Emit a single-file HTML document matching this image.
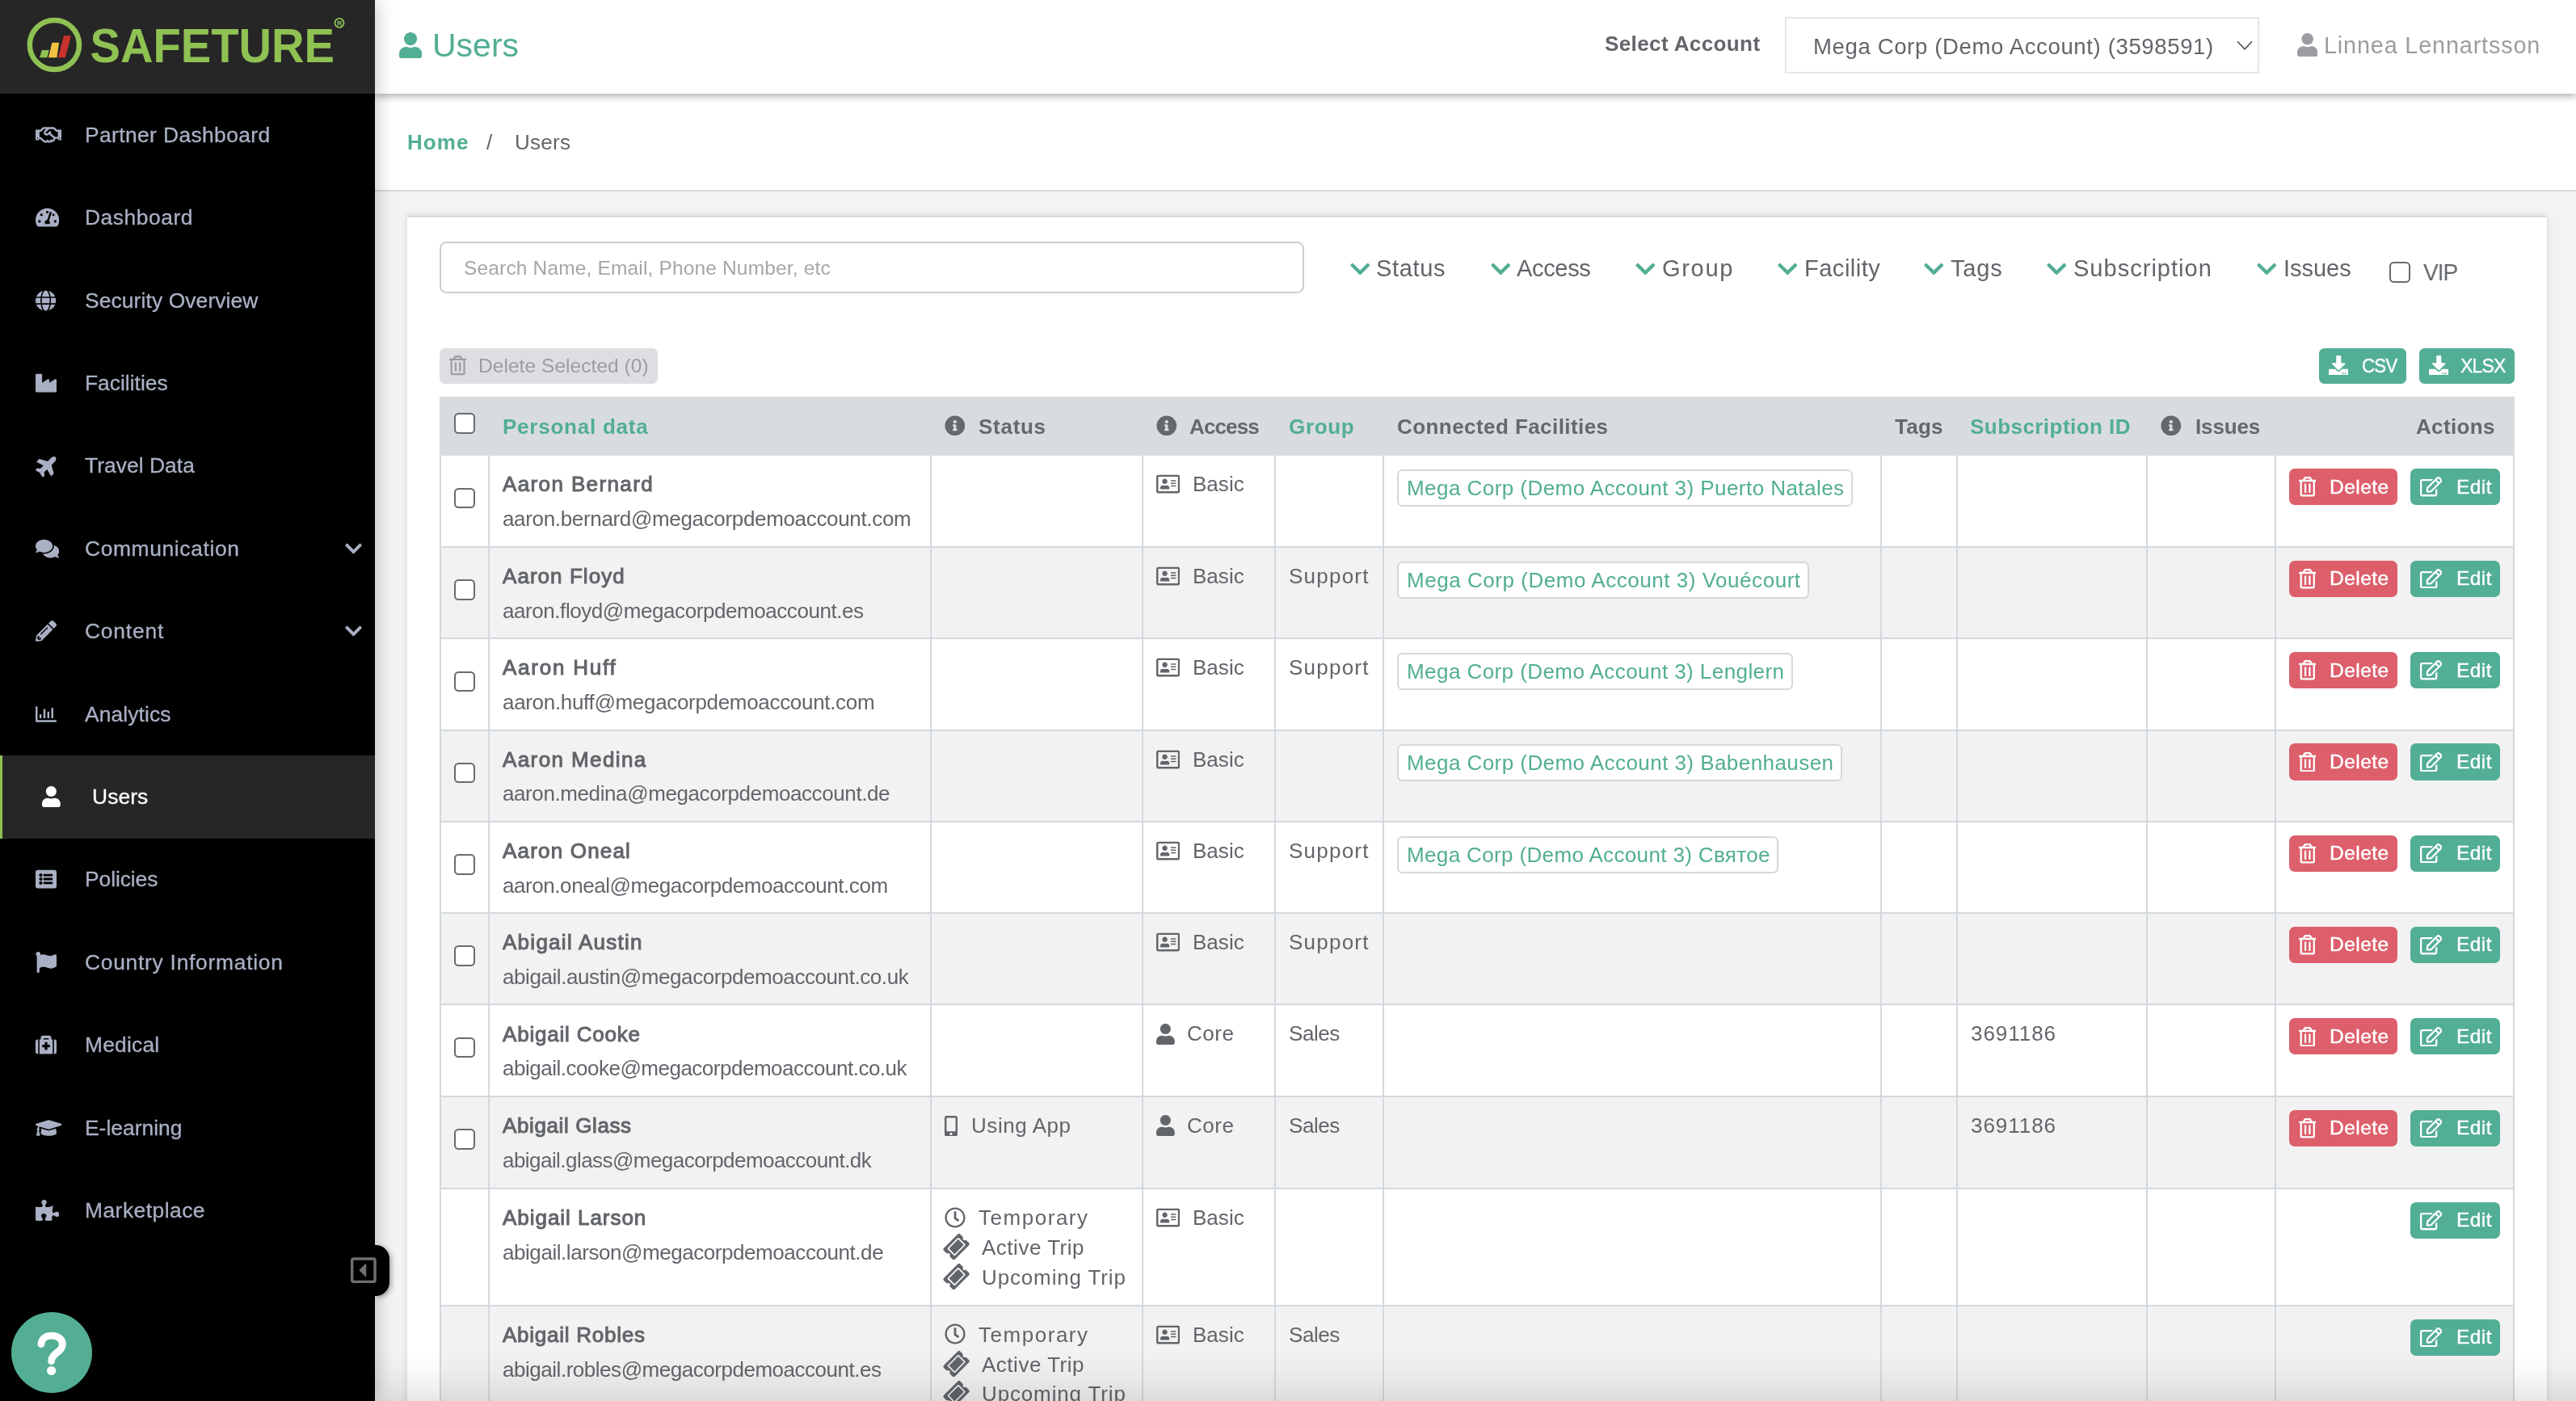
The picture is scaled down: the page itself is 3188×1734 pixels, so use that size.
<!DOCTYPE html>
<html><head><meta charset="utf-8"><title>Users</title><style>
html,body{margin:0;padding:0;overflow:hidden}
body{width:3188px;height:1734px;overflow:hidden;position:relative;background:#fff;font-family:"Liberation Sans",sans-serif}
.t{position:absolute;white-space:pre;line-height:1;transform-origin:0 50%;will-change:transform}
#contentbg{position:absolute;left:464px;top:236px;width:2724px;height:1498px;background:#f3f3f3}
#card{position:absolute;left:504px;top:267.2px;width:2648px;height:1600px;background:#fff;box-sizing:border-box;border-top:2px solid #d4d9dd;box-shadow:0 0 9px rgba(0,0,0,.12)}
#crumb{position:absolute;left:464px;top:116px;width:2724px;height:118.8px;background:#fff;border-bottom:2.2px solid #d3d8dc}
#header{position:absolute;left:464px;top:0;width:2724px;height:116px;background:#fff;box-shadow:0 3px 9px rgba(0,0,0,.33)}
#sidebar{position:absolute;left:0;top:0;width:464px;height:1734px;background:#000;box-shadow:0 0 23px rgba(0,0,0,.27)}
#logobar{position:absolute;left:0;top:0;width:464px;height:116px;background:#262626}
#botshadow{position:absolute;left:464px;top:1672px;width:2724px;height:62px;background:linear-gradient(to bottom,rgba(0,0,0,0) 0%,rgba(0,0,0,.022) 40%,rgba(0,0,0,.055) 72%,rgba(0,0,0,.095) 100%)}
</style></head><body>
<div id="contentbg"></div>
<div id="card"></div>
<div id="crumb"></div>
<span class="t" style="left: 504.27px; top: 162.99px; font-size: 26px; color: rgb(82, 174, 148); font-weight: 700; letter-spacing: 1.043px;">Home</span>
<span class="t" style="left:602.27px;top:162.99px;font-size:26px;color:#62656a;font-weight:400;">/</span>
<span class="t" style="left: 637.27px; top: 162.99px; font-size: 26px; color: rgb(98, 101, 106); font-weight: 400; letter-spacing: 0.293px;">Users</span>
<div id="header"></div>
<svg style="position:absolute;left:493.80px;top:39.80px;width:28.18px;height:32.20px;" viewBox="0 0 448 512" preserveAspectRatio="none"><path fill="#52ae94" d="M224 256c70.7 0 128-57.3 128-128S294.7 0 224 0 96 57.3 96 128s57.3 128 128 128zm89.6 32h-16.700c-22.200 10.200-46.900 16-72.900 16s-50.600-5.800-72.900-16h-16.700C60.200 288 0 348.200 0 422.400V464c0 26.500 21.500 48 48 48h352c26.500 0 48-21.500 48-48v-41.600c0-74.200-60.200-134.400-134.400-134.400z"></path></svg>
<span class="t" style="left: 535.05px; top: 36.29px; font-size: 41px; color: rgb(82, 174, 148); font-weight: 400; letter-spacing: 0px;">Users</span>
<span class="t" style="left: 1986.47px; top: 41.39px; font-size: 26px; color: rgb(98, 101, 106); font-weight: 700; letter-spacing: 0.4px;">Select Account</span>
<div style="position:absolute;left:2208.60px;top:21.00px;width:587.00px;height:70.00px;box-sizing:border-box;border:2px solid #e4e7ea;background:#fff"></div>
<span class="t" style="left: 2243.53px; top: 43.72px; font-size: 27.5px; color: rgb(98, 101, 106); font-weight: 400; letter-spacing: 0.647px;">Mega Corp (Demo Account) (3598591)</span>
<svg style="position:absolute;left:2767px;top:49px;width:22px;height:15px" viewBox="0 0 22 15"><path d="M2.6 2.8 L11 11.8 L19.4 2.8" fill="none" stroke="#5e6267" stroke-width="1.8" stroke-linecap="round" stroke-linejoin="round"></path></svg>
<svg style="position:absolute;left:2843.00px;top:41.00px;width:25.38px;height:29.00px;" viewBox="0 0 448 512" preserveAspectRatio="none"><path fill="#9b9da0" d="M224 256c70.7 0 128-57.3 128-128S294.7 0 224 0 96 57.3 96 128s57.3 128 128 128zm89.6 32h-16.700c-22.200 10.200-46.900 16-72.900 16s-50.600-5.800-72.900-16h-16.700C60.200 288 0 348.200 0 422.400V464c0 26.500 21.500 48 48 48h352c26.500 0 48-21.500 48-48v-41.600c0-74.200-60.200-134.400-134.400-134.400z"></path></svg>
<span class="t" style="left: 2875.59px; top: 42.22px; font-size: 28.8px; color: rgb(155, 157, 160); font-weight: 400; letter-spacing: 0.842px;">Linnea Lennartsson</span>
<div style="position:absolute;left:544.10px;top:299.00px;width:1069.90px;height:63.90px;box-sizing:border-box;border:2px solid #c9ced5;border-radius:8.5px;background:#fff"></div>
<span class="t" style="left: 573.61px; top: 319.96px; font-size: 24.5px; color: rgb(164, 166, 169); font-weight: 400; letter-spacing: 0.157px;">Search Name, Email, Phone Number, etc</span>
<svg style="position:absolute;left:1670.50px;top:318.50px;width:24.50px;height:28.00px;" viewBox="0 0 448 512" preserveAspectRatio="none"><path fill="#52ae94" d="M207.029 381.476L12.686 187.132c-9.373-9.373-9.373-24.569 0-33.941l22.667-22.667c9.357-9.357 24.522-9.375 33.901-.04L224 284.505l154.745-154.021c9.379-9.335 24.544-9.317 33.901.04l22.667 22.667c9.373 9.373 9.373 24.569 0 33.941L240.971 381.476c-9.373 9.372-24.569 9.372-33.942 0z"></path></svg>
<span class="t" style="left: 1703.19px; top: 318.45px; font-size: 29px; color: rgb(98, 101, 106); font-weight: 400; letter-spacing: 0.68px;">Status</span>
<svg style="position:absolute;left:1844.50px;top:318.50px;width:24.50px;height:28.00px;" viewBox="0 0 448 512" preserveAspectRatio="none"><path fill="#52ae94" d="M207.029 381.476L12.686 187.132c-9.373-9.373-9.373-24.569 0-33.941l22.667-22.667c9.357-9.357 24.522-9.375 33.901-.04L224 284.505l154.745-154.021c9.379-9.335 24.544-9.317 33.901.04l22.667 22.667c9.373 9.373 9.373 24.569 0 33.941L240.971 381.476c-9.373 9.372-24.569 9.372-33.942 0z"></path></svg>
<span class="t" style="left: 1877.19px; top: 318.45px; font-size: 29px; color: rgb(98, 101, 106); font-weight: 400; letter-spacing: -0.333px;">Access</span>
<svg style="position:absolute;left:2024.00px;top:318.50px;width:24.50px;height:28.00px;" viewBox="0 0 448 512" preserveAspectRatio="none"><path fill="#52ae94" d="M207.029 381.476L12.686 187.132c-9.373-9.373-9.373-24.569 0-33.941l22.667-22.667c9.357-9.357 24.522-9.375 33.901-.04L224 284.505l154.745-154.021c9.379-9.335 24.544-9.317 33.901.04l22.667 22.667c9.373 9.373 9.373 24.569 0 33.941L240.971 381.476c-9.373 9.372-24.569 9.372-33.942 0z"></path></svg>
<span class="t" style="left: 2057.19px; top: 318.45px; font-size: 29px; color: rgb(98, 101, 106); font-weight: 400; letter-spacing: 1.678px;">Group</span>
<svg style="position:absolute;left:2200.00px;top:318.50px;width:24.50px;height:28.00px;" viewBox="0 0 448 512" preserveAspectRatio="none"><path fill="#52ae94" d="M207.029 381.476L12.686 187.132c-9.373-9.373-9.373-24.569 0-33.941l22.667-22.667c9.357-9.357 24.522-9.375 33.901-.04L224 284.505l154.745-154.021c9.379-9.335 24.544-9.317 33.901.04l22.667 22.667c9.373 9.373 9.373 24.569 0 33.941L240.971 381.476c-9.373 9.372-24.569 9.372-33.942 0z"></path></svg>
<span class="t" style="left: 2233.19px; top: 318.45px; font-size: 29px; color: rgb(98, 101, 106); font-weight: 400; letter-spacing: 0.512px;">Facility</span>
<svg style="position:absolute;left:2381.00px;top:318.50px;width:24.50px;height:28.00px;" viewBox="0 0 448 512" preserveAspectRatio="none"><path fill="#52ae94" d="M207.029 381.476L12.686 187.132c-9.373-9.373-9.373-24.569 0-33.941l22.667-22.667c9.357-9.357 24.522-9.375 33.901-.04L224 284.505l154.745-154.021c9.379-9.335 24.544-9.317 33.901.04l22.667 22.667c9.373 9.373 9.373 24.569 0 33.941L240.971 381.476c-9.373 9.372-24.569 9.372-33.942 0z"></path></svg>
<span class="t" style="left: 2414.19px; top: 318.45px; font-size: 29px; color: rgb(98, 101, 106); font-weight: 400; letter-spacing: 0.851px;">Tags</span>
<svg style="position:absolute;left:2533.00px;top:318.50px;width:24.50px;height:28.00px;" viewBox="0 0 448 512" preserveAspectRatio="none"><path fill="#52ae94" d="M207.029 381.476L12.686 187.132c-9.373-9.373-9.373-24.569 0-33.941l22.667-22.667c9.357-9.357 24.522-9.375 33.901-.04L224 284.505l154.745-154.021c9.379-9.335 24.544-9.317 33.901.04l22.667 22.667c9.373 9.373 9.373 24.569 0 33.941L240.971 381.476c-9.373 9.372-24.569 9.372-33.942 0z"></path></svg>
<span class="t" style="left: 2565.69px; top: 318.45px; font-size: 29px; color: rgb(98, 101, 106); font-weight: 400; letter-spacing: 1.021px;">Subscription</span>
<svg style="position:absolute;left:2792.50px;top:318.50px;width:24.50px;height:28.00px;" viewBox="0 0 448 512" preserveAspectRatio="none"><path fill="#52ae94" d="M207.029 381.476L12.686 187.132c-9.373-9.373-9.373-24.569 0-33.941l22.667-22.667c9.357-9.357 24.522-9.375 33.901-.04L224 284.505l154.745-154.021c9.379-9.335 24.544-9.317 33.901.04l22.667 22.667c9.373 9.373 9.373 24.569 0 33.941L240.971 381.476c-9.373 9.372-24.569 9.372-33.942 0z"></path></svg>
<span class="t" style="left: 2826.19px; top: 318.45px; font-size: 29px; color: rgb(98, 101, 106); font-weight: 400; letter-spacing: -0.022px;">Issues</span>
<div style="position:absolute;left:2956.90px;top:324.00px;width:26.00px;height:26.00px;box-sizing:border-box;border:2.4px solid #6b6b6b;border-radius:5.5px;background:#fff"></div>
<span class="t" style="left: 2998.89px; top: 322.75px; font-size: 29px; color: rgb(98, 101, 106); font-weight: 400; letter-spacing: -1.015px; transform: scaleX(0.9687);">VIP</span>
<div style="position:absolute;left:544.00px;top:430.90px;width:270.00px;height:43.90px;background:#dcdee2;border-radius:6.5px"></div>
<svg style="position:absolute;left:556.40px;top:440.40px;width:21.18px;height:24.20px;" viewBox="0 0 448 512" preserveAspectRatio="none"><path fill="#9b9da0" d="M268 416h24a12 12 0 0 0 12-12V188a12 12 0 0 0-12-12h-24a12 12 0 0 0-12 12v216a12 12 0 0 0 12 12zM432 80h-82.410l-34-56.700A48 48 0 0 0 274.410 0H173.590a48 48 0 0 0-41.160 23.300L98.410 80H16A16 16 0 0 0 0 96v16a16 16 0 0 0 16 16h16v336a48 48 0 0 0 48 48h288a48 48 0 0 0 48-48V128h16a16 16 0 0 0 16-16V96a16 16 0 0 0-16-16zM171.840 50.910A6 6 0 0 1 177 48h94a6 6 0 0 1 5.150 2.910L293.610 80H154.390zM368 464H80V128h288zm-212-48h24a12 12 0 0 0 12-12V188a12 12 0 0 0-12-12h-24a12 12 0 0 0-12 12v216a12 12 0 0 0 12 12z"></path></svg>
<span class="t" style="left: 591.81px; top: 441.46px; font-size: 24.5px; color: rgb(155, 157, 160); font-weight: 400; letter-spacing: 0.051px;">Delete Selected (0)</span>
<div style="position:absolute;left:2870.00px;top:430.90px;width:108.00px;height:43.90px;background:#52ae94;border-radius:6.5px"></div>
<svg style="position:absolute;left:2881.80px;top:439.80px;width:24.50px;height:24.50px;" viewBox="0 0 512 512" preserveAspectRatio="none"><path fill="#fff" d="M216 0h80c13.300 0 24 10.700 24 24v168h87.700c17.800 0 26.700 21.500 14.100 34.100L269.700 378.300c-7.500 7.500-19.800 7.500-27.300 0L90.100 226.100c-12.600-12.600-3.700-34.100 14.100-34.100H192V24c0-13.300 10.700-24 24-24zm296 376v112c0 13.300-10.700 24-24 24H24c-13.300 0-24-10.700-24-24V376c0-13.300 10.700-24 24-24h146.700l49 49c20.100 20.100 52.500 20.100 72.600 0l49-49H488c13.300 0 24 10.700 24 24zm-124 88c0-11-9-20-20-20s-20 9-20 20 9 20 20 20 20-9 20-20zm64 0c0-11-9-20-20-20s-20 9-20 20 9 20 20 20 20-9 20-20z"></path></svg>
<span class="t" style="left: 2923.01px; top: 441.26px; font-size: 24.5px; color: rgb(255, 255, 255); font-weight: 400; -webkit-text-stroke: 0.4px rgb(255, 255, 255); letter-spacing: -0.858px; transform: scaleX(0.9094);">CSV</span>
<div style="position:absolute;left:2994.00px;top:430.90px;width:118.00px;height:43.90px;background:#52ae94;border-radius:6.5px"></div>
<svg style="position:absolute;left:3005.90px;top:439.80px;width:24.50px;height:24.50px;" viewBox="0 0 512 512" preserveAspectRatio="none"><path fill="#fff" d="M216 0h80c13.300 0 24 10.700 24 24v168h87.700c17.800 0 26.700 21.500 14.100 34.100L269.700 378.300c-7.500 7.500-19.800 7.500-27.300 0L90.100 226.100c-12.600-12.600-3.700-34.100 14.100-34.100H192V24c0-13.300 10.700-24 24-24zm296 376v112c0 13.300-10.700 24-24 24H24c-13.300 0-24-10.700-24-24V376c0-13.300 10.700-24 24-24h146.700l49 49c20.100 20.100 52.500 20.100 72.600 0l49-49H488c13.300 0 24 10.700 24 24zm-124 88c0-11-9-20-20-20s-20 9-20 20 9 20 20 20 20-9 20-20zm64 0c0-11-9-20-20-20s-20 9-20 20 9 20 20 20 20-9 20-20z"></path></svg>
<span class="t" style="left: 3044.71px; top: 441.26px; font-size: 24.5px; color: rgb(255, 255, 255); font-weight: 400; -webkit-text-stroke: 0.4px rgb(255, 255, 255); letter-spacing: -0.858px; transform: scaleX(0.9381);">XLSX</span>
<div style="position:absolute;left:544.00px;top:491.00px;width:2568.00px;height:72.90px;background:#d8dcdf"></div>
<div style="position:absolute;left:562.00px;top:511.20px;width:25.60px;height:25.60px;box-sizing:border-box;border:2.4px solid #6b6b6b;border-radius:5.5px;background:#fff"></div>
<span class="t" style="left: 621.87px; top: 514.59px; font-size: 26px; color: rgb(82, 174, 148); font-weight: 700; letter-spacing: 0.764px;">Personal data</span>
<svg style="position:absolute;left:1168.80px;top:513.90px;width:25.60px;height:25.60px;" viewBox="0 0 512 512" preserveAspectRatio="none"><path fill="#65686d" d="M256 8C119.043 8 8 119.083 8 256c0 136.997 111.043 248 248 248s248-111.003 248-248C504 119.083 392.957 8 256 8zm0 110c23.196 0 42 18.804 42 42s-18.804 42-42 42-42-18.804-42-42 18.804-42 42-42zm56 254c0 6.627-5.373 12-12 12h-88c-6.627 0-12-5.373-12-12v-24c0-6.627 5.373-12 12-12h12v-64h-12c-6.627 0-12-5.373-12-12v-24c0-6.627 5.373-12 12-12h64c6.627 0 12 5.373 12 12v100h12c6.627 0 12 5.373 12 12v24z"></path></svg>
<span class="t" style="left: 1211.27px; top: 514.59px; font-size: 26px; color: rgb(101, 104, 109); font-weight: 700; letter-spacing: 0.722px;">Status</span>
<svg style="position:absolute;left:1431.00px;top:513.90px;width:25.60px;height:25.60px;" viewBox="0 0 512 512" preserveAspectRatio="none"><path fill="#65686d" d="M256 8C119.043 8 8 119.083 8 256c0 136.997 111.043 248 248 248s248-111.003 248-248C504 119.083 392.957 8 256 8zm0 110c23.196 0 42 18.804 42 42s-18.804 42-42 42-42-18.804-42-42 18.804-42 42-42zm56 254c0 6.627-5.373 12-12 12h-88c-6.627 0-12-5.373-12-12v-24c0-6.627 5.373-12 12-12h12v-64h-12c-6.627 0-12-5.373-12-12v-24c0-6.627 5.373-12 12-12h64c6.627 0 12 5.373 12 12v100h12c6.627 0 12 5.373 12 12v24z"></path></svg>
<span class="t" style="left: 1472.27px; top: 514.59px; font-size: 26px; color: rgb(101, 104, 109); font-weight: 700; letter-spacing: -0.88px;">Access</span>
<span class="t" style="left: 1595.27px; top: 514.59px; font-size: 26px; color: rgb(82, 174, 148); font-weight: 700; letter-spacing: 0.67px;">Group</span>
<span class="t" style="left: 1728.97px; top: 514.59px; font-size: 26px; color: rgb(101, 104, 109); font-weight: 700; letter-spacing: 0.433px;">Connected Facilities</span>
<span class="t" style="left: 2344.77px; top: 514.59px; font-size: 26px; color: rgb(101, 104, 109); font-weight: 700; letter-spacing: 0.271px;">Tags</span>
<span class="t" style="left: 2438.27px; top: 514.59px; font-size: 26px; color: rgb(82, 174, 148); font-weight: 700; letter-spacing: 0.454px;">Subscription ID</span>
<svg style="position:absolute;left:2674.20px;top:513.90px;width:25.60px;height:25.60px;" viewBox="0 0 512 512" preserveAspectRatio="none"><path fill="#65686d" d="M256 8C119.043 8 8 119.083 8 256c0 136.997 111.043 248 248 248s248-111.003 248-248C504 119.083 392.957 8 256 8zm0 110c23.196 0 42 18.804 42 42s-18.804 42-42 42-42-18.804-42-42 18.804-42 42-42zm56 254c0 6.627-5.373 12-12 12h-88c-6.627 0-12-5.373-12-12v-24c0-6.627 5.373-12 12-12h12v-64h-12c-6.627 0-12-5.373-12-12v-24c0-6.627 5.373-12 12-12h64c6.627 0 12 5.373 12 12v100h12c6.627 0 12 5.373 12 12v24z"></path></svg>
<span class="t" style="left: 2716.67px; top: 514.59px; font-size: 26px; color: rgb(101, 104, 109); font-weight: 700; letter-spacing: -0.135px;">Issues</span>
<span class="t" style="left: 2990.27px; top: 514.59px; font-size: 26px; color: rgb(101, 104, 109); font-weight: 700; letter-spacing: 0.339px;">Actions</span>
<div style="position:absolute;left:562.00px;top:603.50px;width:25.60px;height:25.60px;box-sizing:border-box;border:2.4px solid #6b6b6b;border-radius:5.5px;background:#fff"></div>
<span class="t" style="left: 621.77px; top: 586.29px; font-size: 26px; color: rgb(98, 101, 106); font-weight: 400; -webkit-text-stroke: 1px rgb(98, 101, 106); letter-spacing: 1.381px;">Aaron Bernard</span>
<span class="t" style="left: 621.67px; top: 628.89px; font-size: 26px; color: rgb(98, 101, 106); font-weight: 400; letter-spacing: -0.337px;">aaron.bernard@megacorpdemoaccount.com</span>
<svg style="position:absolute;left:1431.00px;top:586.10px;width:29.25px;height:26.00px;" viewBox="0 0 576 512" preserveAspectRatio="none"><path fill="#62656a" d="M528 32H48C21.500 32 0 53.500 0 80v352c0 26.500 21.500 48 48 48h480c26.500 0 48-21.500 48-48V80c0-26.500-21.500-48-48-48zm0 400H48V80h480v352zM208 256c35.300 0 64-28.700 64-64s-28.700-64-64-64-64 28.700-64 64 28.700 64 64 64zm-89.600 128h179.200c12.400 0 22.400-8.600 22.400-19.200v-19.200c0-31.800-30.100-57.600-67.200-57.600-10.800 0-18.700 8-44.800 8-26.900 0-33.400-8-44.800-8-37.100 0-67.200 25.800-67.200 57.600v19.200c0 10.600 10 19.200 22.400 19.200zM360 320h112c4.400 0 8-3.600 8-8v-16c0-4.400-3.600-8-8-8H360c-4.400 0-8 3.600-8 8v16c0 4.400 3.600 8 8 8zm0-64h112c4.400 0 8-3.600 8-8v-16c0-4.400-3.600-8-8-8H360c-4.400 0-8 3.600-8 8v16c0 4.400 3.600 8 8 8zm0-64h112c4.400 0 8-3.600 8-8v-16c0-4.400-3.600-8-8-8H360c-4.400 0-8 3.600-8 8v16c0 4.400 3.600 8 8 8z"></path></svg>
<span class="t" style="left: 1476.27px; top: 586.19px; font-size: 26px; color: rgb(98, 101, 106); font-weight: 400; letter-spacing: 0.025px;">Basic</span>
<div style="position:absolute;left:1729.30px;top:580.70px;width:563.60px;height:46.00px;box-sizing:border-box;border:2px solid #d3d9de;border-radius:6.5px;background:#fff"></div>
<span class="t" style="left: 1740.97px; top: 591.09px; font-size: 26px; color: rgb(82, 174, 148); font-weight: 400; letter-spacing: 0.448px;">Mega Corp (Demo Account 3) Puerto Natales</span>
<div style="position:absolute;left:2833.00px;top:580.00px;width:133.80px;height:45.20px;background:#dd5f6b;border-radius:7px"></div>
<svg style="position:absolute;left:2845.00px;top:590.30px;width:21.44px;height:24.50px;" viewBox="0 0 448 512" preserveAspectRatio="none"><path fill="#fff" d="M268 416h24a12 12 0 0 0 12-12V188a12 12 0 0 0-12-12h-24a12 12 0 0 0-12 12v216a12 12 0 0 0 12 12zM432 80h-82.410l-34-56.700A48 48 0 0 0 274.410 0H173.590a48 48 0 0 0-41.160 23.300L98.410 80H16A16 16 0 0 0 0 96v16a16 16 0 0 0 16 16h16v336a48 48 0 0 0 48 48h288a48 48 0 0 0 48-48V128h16a16 16 0 0 0 16-16V96a16 16 0 0 0-16-16zM171.840 50.910A6 6 0 0 1 177 48h94a6 6 0 0 1 5.150 2.910L293.610 80H154.390zM368 464H80V128h288zm-212-48h24a12 12 0 0 0 12-12V188a12 12 0 0 0-12-12h-24a12 12 0 0 0-12 12v216a12 12 0 0 0 12 12z"></path></svg>
<span class="t" style="left: 2882.71px; top: 590.56px; font-size: 24.5px; color: rgb(255, 255, 255); font-weight: 400; -webkit-text-stroke: 0.4px rgb(255, 255, 255); letter-spacing: 0.466px;">Delete</span>
<div style="position:absolute;left:2983.00px;top:580.00px;width:111.00px;height:45.20px;background:#52ae94;border-radius:7px"></div>
<svg style="position:absolute;left:2994.90px;top:590.30px;width:27.45px;height:24.40px;" viewBox="0 0 576 512" preserveAspectRatio="none"><path fill="#fff" d="M402.300 344.900l32-32c5-5 13.700-1.500 13.700 5.700V464c0 26.500-21.500 48-48 48H48c-26.500 0-48-21.500-48-48V112c0-26.500 21.500-48 48-48h273.500c7.100 0 10.700 8.600 5.700 13.700l-32 32c-1.500 1.500-3.500 2.300-5.700 2.300H48v352h352V350.500c0-2.100.8-4.100 2.300-5.600zm156.600-201.800L296.300 405.700l-90.400 10c-26.200 2.900-48.500-19.200-45.600-45.600l10-90.400L432.900 17.100c22.900-22.900 59.900-22.900 82.700 0l43.200 43.200c22.900 22.900 22.900 60 .1 82.800zM460.100 174L402 115.900 216.200 301.800l-7.300 65.300 65.300-7.300L460.100 174zm64.800-79.700l-43.200-43.200c-4.100-4.100-10.800-4.100-14.800 0L436 82l58.100 58.100 30.900-30.900c4-4.200 4-10.800-.1-14.900z"></path></svg>
<span class="t" style="left: 3039.71px; top: 590.56px; font-size: 24.5px; color: rgb(255, 255, 255); font-weight: 400; -webkit-text-stroke: 0.4px rgb(255, 255, 255); letter-spacing: 0.447px;">Edit</span>
<div style="position:absolute;left:544.00px;top:676.90px;width:2568.00px;height:113.30px;background:#f2f2f2"></div>
<div style="position:absolute;left:562.00px;top:717.30px;width:25.60px;height:25.60px;box-sizing:border-box;border:2.4px solid #6b6b6b;border-radius:5.5px;background:#fff"></div>
<span class="t" style="left: 621.77px; top: 700.09px; font-size: 26px; color: rgb(98, 101, 106); font-weight: 400; -webkit-text-stroke: 1px rgb(98, 101, 106); letter-spacing: 1.049px;">Aaron Floyd</span>
<span class="t" style="left: 621.67px; top: 742.69px; font-size: 26px; color: rgb(98, 101, 106); font-weight: 400; letter-spacing: -0.435px;">aaron.floyd@megacorpdemoaccount.es</span>
<svg style="position:absolute;left:1431.00px;top:699.90px;width:29.25px;height:26.00px;" viewBox="0 0 576 512" preserveAspectRatio="none"><path fill="#62656a" d="M528 32H48C21.500 32 0 53.500 0 80v352c0 26.500 21.500 48 48 48h480c26.500 0 48-21.500 48-48V80c0-26.500-21.500-48-48-48zm0 400H48V80h480v352zM208 256c35.300 0 64-28.700 64-64s-28.700-64-64-64-64 28.700-64 64 28.700 64 64 64zm-89.600 128h179.200c12.400 0 22.400-8.600 22.400-19.200v-19.200c0-31.800-30.100-57.600-67.200-57.600-10.800 0-18.700 8-44.800 8-26.900 0-33.400-8-44.800-8-37.100 0-67.200 25.800-67.200 57.600v19.200c0 10.600 10 19.200 22.400 19.200zM360 320h112c4.400 0 8-3.600 8-8v-16c0-4.400-3.600-8-8-8H360c-4.400 0-8 3.600-8 8v16c0 4.400 3.600 8 8 8zm0-64h112c4.400 0 8-3.600 8-8v-16c0-4.400-3.600-8-8-8H360c-4.400 0-8 3.600-8 8v16c0 4.400 3.600 8 8 8zm0-64h112c4.400 0 8-3.600 8-8v-16c0-4.400-3.600-8-8-8H360c-4.400 0-8 3.600-8 8v16c0 4.400 3.600 8 8 8z"></path></svg>
<span class="t" style="left: 1476.27px; top: 699.99px; font-size: 26px; color: rgb(98, 101, 106); font-weight: 400; letter-spacing: 0.025px;">Basic</span>
<span class="t" style="left: 1595.07px; top: 699.99px; font-size: 26px; color: rgb(98, 101, 106); font-weight: 400; letter-spacing: 1.234px;">Support</span>
<div style="position:absolute;left:1729.30px;top:694.50px;width:509.60px;height:46.00px;box-sizing:border-box;border:2px solid #d3d9de;border-radius:6.5px;background:#fff"></div>
<span class="t" style="left: 1740.97px; top: 704.89px; font-size: 26px; color: rgb(82, 174, 148); font-weight: 400; letter-spacing: 0.538px;">Mega Corp (Demo Account 3) Vouécourt</span>
<div style="position:absolute;left:2833.00px;top:693.80px;width:133.80px;height:45.20px;background:#dd5f6b;border-radius:7px"></div>
<svg style="position:absolute;left:2845.00px;top:704.10px;width:21.44px;height:24.50px;" viewBox="0 0 448 512" preserveAspectRatio="none"><path fill="#fff" d="M268 416h24a12 12 0 0 0 12-12V188a12 12 0 0 0-12-12h-24a12 12 0 0 0-12 12v216a12 12 0 0 0 12 12zM432 80h-82.410l-34-56.700A48 48 0 0 0 274.410 0H173.590a48 48 0 0 0-41.160 23.300L98.410 80H16A16 16 0 0 0 0 96v16a16 16 0 0 0 16 16h16v336a48 48 0 0 0 48 48h288a48 48 0 0 0 48-48V128h16a16 16 0 0 0 16-16V96a16 16 0 0 0-16-16zM171.840 50.910A6 6 0 0 1 177 48h94a6 6 0 0 1 5.150 2.910L293.610 80H154.390zM368 464H80V128h288zm-212-48h24a12 12 0 0 0 12-12V188a12 12 0 0 0-12-12h-24a12 12 0 0 0-12 12v216a12 12 0 0 0 12 12z"></path></svg>
<span class="t" style="left: 2882.71px; top: 704.36px; font-size: 24.5px; color: rgb(255, 255, 255); font-weight: 400; -webkit-text-stroke: 0.4px rgb(255, 255, 255); letter-spacing: 0.466px;">Delete</span>
<div style="position:absolute;left:2983.00px;top:693.80px;width:111.00px;height:45.20px;background:#52ae94;border-radius:7px"></div>
<svg style="position:absolute;left:2994.90px;top:704.10px;width:27.45px;height:24.40px;" viewBox="0 0 576 512" preserveAspectRatio="none"><path fill="#fff" d="M402.300 344.900l32-32c5-5 13.700-1.500 13.700 5.700V464c0 26.500-21.500 48-48 48H48c-26.500 0-48-21.500-48-48V112c0-26.500 21.500-48 48-48h273.500c7.100 0 10.700 8.600 5.700 13.700l-32 32c-1.500 1.500-3.500 2.300-5.700 2.300H48v352h352V350.500c0-2.100.8-4.100 2.300-5.600zm156.600-201.800L296.300 405.700l-90.400 10c-26.200 2.900-48.500-19.200-45.600-45.600l10-90.400L432.900 17.100c22.900-22.900 59.900-22.900 82.700 0l43.200 43.200c22.900 22.900 22.900 60 .1 82.800zM460.100 174L402 115.900 216.200 301.800l-7.300 65.300 65.300-7.300L460.100 174zm64.800-79.700l-43.200-43.200c-4.100-4.100-10.800-4.100-14.800 0L436 82l58.100 58.100 30.900-30.900c4-4.200 4-10.800-.1-14.900z"></path></svg>
<span class="t" style="left: 3039.71px; top: 704.36px; font-size: 24.5px; color: rgb(255, 255, 255); font-weight: 400; -webkit-text-stroke: 0.4px rgb(255, 255, 255); letter-spacing: 0.447px;">Edit</span>
<div style="position:absolute;left:562.00px;top:830.60px;width:25.60px;height:25.60px;box-sizing:border-box;border:2.4px solid #6b6b6b;border-radius:5.5px;background:#fff"></div>
<span class="t" style="left: 621.77px; top: 813.39px; font-size: 26px; color: rgb(98, 101, 106); font-weight: 400; -webkit-text-stroke: 1px rgb(98, 101, 106); letter-spacing: 1.772px;">Aaron Huff</span>
<span class="t" style="left: 621.67px; top: 855.99px; font-size: 26px; color: rgb(98, 101, 106); font-weight: 400; letter-spacing: -0.318px;">aaron.huff@megacorpdemoaccount.com</span>
<svg style="position:absolute;left:1431.00px;top:813.20px;width:29.25px;height:26.00px;" viewBox="0 0 576 512" preserveAspectRatio="none"><path fill="#62656a" d="M528 32H48C21.500 32 0 53.500 0 80v352c0 26.500 21.500 48 48 48h480c26.500 0 48-21.500 48-48V80c0-26.500-21.500-48-48-48zm0 400H48V80h480v352zM208 256c35.300 0 64-28.700 64-64s-28.700-64-64-64-64 28.700-64 64 28.700 64 64 64zm-89.600 128h179.200c12.400 0 22.400-8.600 22.400-19.200v-19.200c0-31.800-30.100-57.600-67.200-57.600-10.800 0-18.700 8-44.800 8-26.900 0-33.400-8-44.800-8-37.100 0-67.200 25.800-67.200 57.600v19.200c0 10.600 10 19.200 22.400 19.200zM360 320h112c4.400 0 8-3.600 8-8v-16c0-4.400-3.600-8-8-8H360c-4.400 0-8 3.600-8 8v16c0 4.400 3.600 8 8 8zm0-64h112c4.400 0 8-3.600 8-8v-16c0-4.400-3.600-8-8-8H360c-4.400 0-8 3.600-8 8v16c0 4.400 3.600 8 8 8zm0-64h112c4.400 0 8-3.600 8-8v-16c0-4.400-3.600-8-8-8H360c-4.400 0-8 3.600-8 8v16c0 4.400 3.600 8 8 8z"></path></svg>
<span class="t" style="left: 1476.27px; top: 813.29px; font-size: 26px; color: rgb(98, 101, 106); font-weight: 400; letter-spacing: 0.025px;">Basic</span>
<span class="t" style="left: 1595.07px; top: 813.29px; font-size: 26px; color: rgb(98, 101, 106); font-weight: 400; letter-spacing: 1.234px;">Support</span>
<div style="position:absolute;left:1729.30px;top:807.80px;width:489.60px;height:46.00px;box-sizing:border-box;border:2px solid #d3d9de;border-radius:6.5px;background:#fff"></div>
<span class="t" style="left: 1740.97px; top: 818.19px; font-size: 26px; color: rgb(82, 174, 148); font-weight: 400; letter-spacing: 0.433px;">Mega Corp (Demo Account 3) Lenglern</span>
<div style="position:absolute;left:2833.00px;top:807.10px;width:133.80px;height:45.20px;background:#dd5f6b;border-radius:7px"></div>
<svg style="position:absolute;left:2845.00px;top:817.40px;width:21.44px;height:24.50px;" viewBox="0 0 448 512" preserveAspectRatio="none"><path fill="#fff" d="M268 416h24a12 12 0 0 0 12-12V188a12 12 0 0 0-12-12h-24a12 12 0 0 0-12 12v216a12 12 0 0 0 12 12zM432 80h-82.410l-34-56.700A48 48 0 0 0 274.410 0H173.590a48 48 0 0 0-41.160 23.300L98.410 80H16A16 16 0 0 0 0 96v16a16 16 0 0 0 16 16h16v336a48 48 0 0 0 48 48h288a48 48 0 0 0 48-48V128h16a16 16 0 0 0 16-16V96a16 16 0 0 0-16-16zM171.840 50.910A6 6 0 0 1 177 48h94a6 6 0 0 1 5.150 2.910L293.610 80H154.390zM368 464H80V128h288zm-212-48h24a12 12 0 0 0 12-12V188a12 12 0 0 0-12-12h-24a12 12 0 0 0-12 12v216a12 12 0 0 0 12 12z"></path></svg>
<span class="t" style="left: 2882.71px; top: 817.66px; font-size: 24.5px; color: rgb(255, 255, 255); font-weight: 400; -webkit-text-stroke: 0.4px rgb(255, 255, 255); letter-spacing: 0.466px;">Delete</span>
<div style="position:absolute;left:2983.00px;top:807.10px;width:111.00px;height:45.20px;background:#52ae94;border-radius:7px"></div>
<svg style="position:absolute;left:2994.90px;top:817.40px;width:27.45px;height:24.40px;" viewBox="0 0 576 512" preserveAspectRatio="none"><path fill="#fff" d="M402.300 344.900l32-32c5-5 13.700-1.500 13.700 5.700V464c0 26.500-21.500 48-48 48H48c-26.500 0-48-21.500-48-48V112c0-26.500 21.500-48 48-48h273.500c7.100 0 10.700 8.600 5.700 13.700l-32 32c-1.500 1.500-3.500 2.300-5.700 2.300H48v352h352V350.500c0-2.100.8-4.100 2.300-5.600zm156.600-201.800L296.300 405.700l-90.400 10c-26.200 2.900-48.500-19.200-45.600-45.600l10-90.400L432.900 17.100c22.900-22.900 59.900-22.900 82.700 0l43.200 43.200c22.900 22.900 22.900 60 .1 82.800zM460.100 174L402 115.900 216.200 301.800l-7.300 65.300 65.300-7.300L460.100 174zm64.800-79.700l-43.200-43.200c-4.100-4.100-10.800-4.100-14.800 0L436 82l58.100 58.100 30.900-30.900c4-4.200 4-10.800-.1-14.900z"></path></svg>
<span class="t" style="left: 3039.71px; top: 817.66px; font-size: 24.5px; color: rgb(255, 255, 255); font-weight: 400; -webkit-text-stroke: 0.4px rgb(255, 255, 255); letter-spacing: 0.447px;">Edit</span>
<div style="position:absolute;left:544.00px;top:903.50px;width:2568.00px;height:113.40px;background:#f2f2f2"></div>
<div style="position:absolute;left:562.00px;top:943.90px;width:25.60px;height:25.60px;box-sizing:border-box;border:2.4px solid #6b6b6b;border-radius:5.5px;background:#fff"></div>
<span class="t" style="left: 621.77px; top: 926.69px; font-size: 26px; color: rgb(98, 101, 106); font-weight: 400; -webkit-text-stroke: 1px rgb(98, 101, 106); letter-spacing: 1.399px;">Aaron Medina</span>
<span class="t" style="left: 621.67px; top: 969.29px; font-size: 26px; color: rgb(98, 101, 106); font-weight: 400; letter-spacing: -0.403px;">aaron.medina@megacorpdemoaccount.de</span>
<svg style="position:absolute;left:1431.00px;top:926.50px;width:29.25px;height:26.00px;" viewBox="0 0 576 512" preserveAspectRatio="none"><path fill="#62656a" d="M528 32H48C21.500 32 0 53.500 0 80v352c0 26.500 21.500 48 48 48h480c26.500 0 48-21.500 48-48V80c0-26.500-21.500-48-48-48zm0 400H48V80h480v352zM208 256c35.300 0 64-28.700 64-64s-28.700-64-64-64-64 28.700-64 64 28.700 64 64 64zm-89.600 128h179.200c12.400 0 22.400-8.600 22.400-19.200v-19.200c0-31.800-30.100-57.600-67.200-57.600-10.800 0-18.700 8-44.800 8-26.900 0-33.400-8-44.800-8-37.100 0-67.200 25.800-67.200 57.600v19.200c0 10.600 10 19.200 22.400 19.200zM360 320h112c4.400 0 8-3.600 8-8v-16c0-4.400-3.600-8-8-8H360c-4.400 0-8 3.600-8 8v16c0 4.400 3.600 8 8 8zm0-64h112c4.400 0 8-3.600 8-8v-16c0-4.400-3.600-8-8-8H360c-4.400 0-8 3.600-8 8v16c0 4.400 3.600 8 8 8zm0-64h112c4.400 0 8-3.600 8-8v-16c0-4.400-3.600-8-8-8H360c-4.400 0-8 3.600-8 8v16c0 4.400 3.600 8 8 8z"></path></svg>
<span class="t" style="left: 1476.27px; top: 926.59px; font-size: 26px; color: rgb(98, 101, 106); font-weight: 400; letter-spacing: 0.025px;">Basic</span>
<div style="position:absolute;left:1729.30px;top:921.10px;width:550.60px;height:46.00px;box-sizing:border-box;border:2px solid #d3d9de;border-radius:6.5px;background:#fff"></div>
<span class="t" style="left: 1740.97px; top: 931.49px; font-size: 26px; color: rgb(82, 174, 148); font-weight: 400; letter-spacing: 0.444px;">Mega Corp (Demo Account 3) Babenhausen</span>
<div style="position:absolute;left:2833.00px;top:920.40px;width:133.80px;height:45.20px;background:#dd5f6b;border-radius:7px"></div>
<svg style="position:absolute;left:2845.00px;top:930.70px;width:21.44px;height:24.50px;" viewBox="0 0 448 512" preserveAspectRatio="none"><path fill="#fff" d="M268 416h24a12 12 0 0 0 12-12V188a12 12 0 0 0-12-12h-24a12 12 0 0 0-12 12v216a12 12 0 0 0 12 12zM432 80h-82.410l-34-56.700A48 48 0 0 0 274.410 0H173.590a48 48 0 0 0-41.160 23.300L98.410 80H16A16 16 0 0 0 0 96v16a16 16 0 0 0 16 16h16v336a48 48 0 0 0 48 48h288a48 48 0 0 0 48-48V128h16a16 16 0 0 0 16-16V96a16 16 0 0 0-16-16zM171.840 50.910A6 6 0 0 1 177 48h94a6 6 0 0 1 5.150 2.910L293.610 80H154.390zM368 464H80V128h288zm-212-48h24a12 12 0 0 0 12-12V188a12 12 0 0 0-12-12h-24a12 12 0 0 0-12 12v216a12 12 0 0 0 12 12z"></path></svg>
<span class="t" style="left: 2882.71px; top: 930.96px; font-size: 24.5px; color: rgb(255, 255, 255); font-weight: 400; -webkit-text-stroke: 0.4px rgb(255, 255, 255); letter-spacing: 0.466px;">Delete</span>
<div style="position:absolute;left:2983.00px;top:920.40px;width:111.00px;height:45.20px;background:#52ae94;border-radius:7px"></div>
<svg style="position:absolute;left:2994.90px;top:930.70px;width:27.45px;height:24.40px;" viewBox="0 0 576 512" preserveAspectRatio="none"><path fill="#fff" d="M402.300 344.900l32-32c5-5 13.700-1.500 13.700 5.700V464c0 26.500-21.500 48-48 48H48c-26.500 0-48-21.500-48-48V112c0-26.500 21.500-48 48-48h273.500c7.100 0 10.700 8.600 5.700 13.700l-32 32c-1.500 1.500-3.500 2.300-5.700 2.300H48v352h352V350.500c0-2.100.8-4.100 2.300-5.600zm156.600-201.800L296.300 405.700l-90.400 10c-26.200 2.900-48.500-19.200-45.600-45.600l10-90.400L432.900 17.100c22.900-22.900 59.900-22.900 82.700 0l43.200 43.200c22.900 22.900 22.900 60 .1 82.800zM460.100 174L402 115.900 216.200 301.800l-7.300 65.300 65.300-7.300L460.100 174zm64.800-79.700l-43.200-43.200c-4.100-4.100-10.800-4.100-14.800 0L436 82l58.100 58.100 30.900-30.900c4-4.200 4-10.800-.1-14.900z"></path></svg>
<span class="t" style="left: 3039.71px; top: 930.96px; font-size: 24.5px; color: rgb(255, 255, 255); font-weight: 400; -webkit-text-stroke: 0.4px rgb(255, 255, 255); letter-spacing: 0.447px;">Edit</span>
<div style="position:absolute;left:562.00px;top:1057.30px;width:25.60px;height:25.60px;box-sizing:border-box;border:2.4px solid #6b6b6b;border-radius:5.5px;background:#fff"></div>
<span class="t" style="left: 621.77px; top: 1040.09px; font-size: 26px; color: rgb(98, 101, 106); font-weight: 400; -webkit-text-stroke: 1px rgb(98, 101, 106); letter-spacing: 1.19px;">Aaron Oneal</span>
<span class="t" style="left: 621.67px; top: 1082.69px; font-size: 26px; color: rgb(98, 101, 106); font-weight: 400; letter-spacing: -0.433px;">aaron.oneal@megacorpdemoaccount.com</span>
<svg style="position:absolute;left:1431.00px;top:1039.90px;width:29.25px;height:26.00px;" viewBox="0 0 576 512" preserveAspectRatio="none"><path fill="#62656a" d="M528 32H48C21.500 32 0 53.500 0 80v352c0 26.500 21.500 48 48 48h480c26.500 0 48-21.500 48-48V80c0-26.500-21.500-48-48-48zm0 400H48V80h480v352zM208 256c35.300 0 64-28.700 64-64s-28.700-64-64-64-64 28.700-64 64 28.700 64 64 64zm-89.600 128h179.200c12.400 0 22.400-8.600 22.400-19.200v-19.200c0-31.800-30.100-57.600-67.200-57.600-10.800 0-18.700 8-44.800 8-26.900 0-33.400-8-44.800-8-37.100 0-67.200 25.800-67.200 57.600v19.200c0 10.600 10 19.200 22.400 19.200zM360 320h112c4.400 0 8-3.600 8-8v-16c0-4.400-3.600-8-8-8H360c-4.400 0-8 3.600-8 8v16c0 4.400 3.600 8 8 8zm0-64h112c4.400 0 8-3.600 8-8v-16c0-4.400-3.600-8-8-8H360c-4.400 0-8 3.600-8 8v16c0 4.400 3.600 8 8 8zm0-64h112c4.400 0 8-3.600 8-8v-16c0-4.400-3.600-8-8-8H360c-4.400 0-8 3.600-8 8v16c0 4.400 3.600 8 8 8z"></path></svg>
<span class="t" style="left: 1476.27px; top: 1039.99px; font-size: 26px; color: rgb(98, 101, 106); font-weight: 400; letter-spacing: 0.025px;">Basic</span>
<span class="t" style="left: 1595.07px; top: 1039.99px; font-size: 26px; color: rgb(98, 101, 106); font-weight: 400; letter-spacing: 1.234px;">Support</span>
<div style="position:absolute;left:1729.30px;top:1034.50px;width:472.10px;height:46.00px;box-sizing:border-box;border:2px solid #d3d9de;border-radius:6.5px;background:#fff"></div>
<span class="t" style="left: 1740.97px; top: 1044.89px; font-size: 26px; color: rgb(82, 174, 148); font-weight: 400; letter-spacing: 0.359px;">Mega Corp (Demo Account 3) Святое</span>
<div style="position:absolute;left:2833.00px;top:1033.80px;width:133.80px;height:45.20px;background:#dd5f6b;border-radius:7px"></div>
<svg style="position:absolute;left:2845.00px;top:1044.10px;width:21.44px;height:24.50px;" viewBox="0 0 448 512" preserveAspectRatio="none"><path fill="#fff" d="M268 416h24a12 12 0 0 0 12-12V188a12 12 0 0 0-12-12h-24a12 12 0 0 0-12 12v216a12 12 0 0 0 12 12zM432 80h-82.410l-34-56.700A48 48 0 0 0 274.410 0H173.590a48 48 0 0 0-41.160 23.300L98.410 80H16A16 16 0 0 0 0 96v16a16 16 0 0 0 16 16h16v336a48 48 0 0 0 48 48h288a48 48 0 0 0 48-48V128h16a16 16 0 0 0 16-16V96a16 16 0 0 0-16-16zM171.840 50.910A6 6 0 0 1 177 48h94a6 6 0 0 1 5.150 2.910L293.610 80H154.390zM368 464H80V128h288zm-212-48h24a12 12 0 0 0 12-12V188a12 12 0 0 0-12-12h-24a12 12 0 0 0-12 12v216a12 12 0 0 0 12 12z"></path></svg>
<span class="t" style="left: 2882.71px; top: 1044.36px; font-size: 24.5px; color: rgb(255, 255, 255); font-weight: 400; -webkit-text-stroke: 0.4px rgb(255, 255, 255); letter-spacing: 0.466px;">Delete</span>
<div style="position:absolute;left:2983.00px;top:1033.80px;width:111.00px;height:45.20px;background:#52ae94;border-radius:7px"></div>
<svg style="position:absolute;left:2994.90px;top:1044.10px;width:27.45px;height:24.40px;" viewBox="0 0 576 512" preserveAspectRatio="none"><path fill="#fff" d="M402.300 344.900l32-32c5-5 13.700-1.500 13.700 5.700V464c0 26.500-21.500 48-48 48H48c-26.500 0-48-21.500-48-48V112c0-26.500 21.500-48 48-48h273.500c7.100 0 10.700 8.600 5.700 13.700l-32 32c-1.500 1.500-3.500 2.300-5.700 2.300H48v352h352V350.500c0-2.100.8-4.100 2.300-5.600zm156.600-201.800L296.300 405.700l-90.400 10c-26.200 2.900-48.500-19.200-45.600-45.600l10-90.400L432.900 17.100c22.900-22.900 59.900-22.900 82.700 0l43.200 43.200c22.900 22.900 22.900 60 .1 82.800zM460.100 174L402 115.900 216.200 301.800l-7.300 65.300 65.300-7.300L460.100 174zm64.800-79.700l-43.200-43.200c-4.100-4.100-10.800-4.100-14.800 0L436 82l58.100 58.100 30.900-30.900c4-4.200 4-10.800-.1-14.900z"></path></svg>
<span class="t" style="left: 3039.71px; top: 1044.36px; font-size: 24.5px; color: rgb(255, 255, 255); font-weight: 400; -webkit-text-stroke: 0.4px rgb(255, 255, 255); letter-spacing: 0.447px;">Edit</span>
<div style="position:absolute;left:544.00px;top:1130.00px;width:2568.00px;height:113.40px;background:#f2f2f2"></div>
<div style="position:absolute;left:562.00px;top:1170.40px;width:25.60px;height:25.60px;box-sizing:border-box;border:2.4px solid #6b6b6b;border-radius:5.5px;background:#fff"></div>
<span class="t" style="left: 621.77px; top: 1153.19px; font-size: 26px; color: rgb(98, 101, 106); font-weight: 400; -webkit-text-stroke: 1px rgb(98, 101, 106); letter-spacing: 1.267px;">Abigail Austin</span>
<span class="t" style="left: 621.67px; top: 1195.79px; font-size: 26px; color: rgb(98, 101, 106); font-weight: 400; letter-spacing: -0.425px;">abigail.austin@megacorpdemoaccount.co.uk</span>
<svg style="position:absolute;left:1431.00px;top:1153.00px;width:29.25px;height:26.00px;" viewBox="0 0 576 512" preserveAspectRatio="none"><path fill="#62656a" d="M528 32H48C21.500 32 0 53.500 0 80v352c0 26.500 21.500 48 48 48h480c26.500 0 48-21.500 48-48V80c0-26.500-21.500-48-48-48zm0 400H48V80h480v352zM208 256c35.300 0 64-28.700 64-64s-28.700-64-64-64-64 28.700-64 64 28.700 64 64 64zm-89.600 128h179.200c12.400 0 22.400-8.600 22.400-19.200v-19.200c0-31.800-30.100-57.600-67.200-57.600-10.800 0-18.700 8-44.800 8-26.900 0-33.400-8-44.800-8-37.100 0-67.200 25.800-67.200 57.600v19.200c0 10.600 10 19.200 22.400 19.200zM360 320h112c4.400 0 8-3.600 8-8v-16c0-4.400-3.600-8-8-8H360c-4.400 0-8 3.600-8 8v16c0 4.400 3.600 8 8 8zm0-64h112c4.400 0 8-3.600 8-8v-16c0-4.400-3.600-8-8-8H360c-4.400 0-8 3.600-8 8v16c0 4.400 3.600 8 8 8zm0-64h112c4.400 0 8-3.600 8-8v-16c0-4.400-3.600-8-8-8H360c-4.400 0-8 3.600-8 8v16c0 4.400 3.600 8 8 8z"></path></svg>
<span class="t" style="left: 1476.27px; top: 1153.09px; font-size: 26px; color: rgb(98, 101, 106); font-weight: 400; letter-spacing: 0.025px;">Basic</span>
<span class="t" style="left: 1595.07px; top: 1153.09px; font-size: 26px; color: rgb(98, 101, 106); font-weight: 400; letter-spacing: 1.234px;">Support</span>
<div style="position:absolute;left:2833.00px;top:1146.90px;width:133.80px;height:45.20px;background:#dd5f6b;border-radius:7px"></div>
<svg style="position:absolute;left:2845.00px;top:1157.20px;width:21.44px;height:24.50px;" viewBox="0 0 448 512" preserveAspectRatio="none"><path fill="#fff" d="M268 416h24a12 12 0 0 0 12-12V188a12 12 0 0 0-12-12h-24a12 12 0 0 0-12 12v216a12 12 0 0 0 12 12zM432 80h-82.410l-34-56.700A48 48 0 0 0 274.410 0H173.590a48 48 0 0 0-41.160 23.300L98.410 80H16A16 16 0 0 0 0 96v16a16 16 0 0 0 16 16h16v336a48 48 0 0 0 48 48h288a48 48 0 0 0 48-48V128h16a16 16 0 0 0 16-16V96a16 16 0 0 0-16-16zM171.840 50.910A6 6 0 0 1 177 48h94a6 6 0 0 1 5.150 2.910L293.610 80H154.390zM368 464H80V128h288zm-212-48h24a12 12 0 0 0 12-12V188a12 12 0 0 0-12-12h-24a12 12 0 0 0-12 12v216a12 12 0 0 0 12 12z"></path></svg>
<span class="t" style="left: 2882.71px; top: 1157.46px; font-size: 24.5px; color: rgb(255, 255, 255); font-weight: 400; -webkit-text-stroke: 0.4px rgb(255, 255, 255); letter-spacing: 0.466px;">Delete</span>
<div style="position:absolute;left:2983.00px;top:1146.90px;width:111.00px;height:45.20px;background:#52ae94;border-radius:7px"></div>
<svg style="position:absolute;left:2994.90px;top:1157.20px;width:27.45px;height:24.40px;" viewBox="0 0 576 512" preserveAspectRatio="none"><path fill="#fff" d="M402.300 344.900l32-32c5-5 13.700-1.500 13.700 5.700V464c0 26.500-21.500 48-48 48H48c-26.500 0-48-21.500-48-48V112c0-26.500 21.500-48 48-48h273.500c7.100 0 10.700 8.600 5.700 13.700l-32 32c-1.500 1.500-3.500 2.300-5.700 2.300H48v352h352V350.500c0-2.100.8-4.100 2.300-5.600zm156.600-201.800L296.300 405.700l-90.400 10c-26.200 2.900-48.500-19.200-45.600-45.600l10-90.400L432.900 17.100c22.900-22.900 59.900-22.900 82.700 0l43.200 43.200c22.900 22.900 22.900 60 .1 82.800zM460.100 174L402 115.900 216.200 301.800l-7.300 65.300 65.300-7.300L460.100 174zm64.800-79.700l-43.200-43.200c-4.100-4.100-10.800-4.100-14.800 0L436 82l58.100 58.100 30.900-30.900c4-4.200 4-10.800-.1-14.900z"></path></svg>
<span class="t" style="left: 3039.71px; top: 1157.46px; font-size: 24.5px; color: rgb(255, 255, 255); font-weight: 400; -webkit-text-stroke: 0.4px rgb(255, 255, 255); letter-spacing: 0.447px;">Edit</span>
<div style="position:absolute;left:562.00px;top:1283.80px;width:25.60px;height:25.60px;box-sizing:border-box;border:2.4px solid #6b6b6b;border-radius:5.5px;background:#fff"></div>
<span class="t" style="left: 621.77px; top: 1266.59px; font-size: 26px; color: rgb(98, 101, 106); font-weight: 400; -webkit-text-stroke: 1px rgb(98, 101, 106); letter-spacing: 0.804px;">Abigail Cooke</span>
<span class="t" style="left: 621.67px; top: 1309.19px; font-size: 26px; color: rgb(98, 101, 106); font-weight: 400; letter-spacing: -0.492px;">abigail.cooke@megacorpdemoaccount.co.uk</span>
<svg style="position:absolute;left:1431.00px;top:1266.90px;width:22.75px;height:26.00px;" viewBox="0 0 448 512" preserveAspectRatio="none"><path fill="#62656a" d="M224 256c70.7 0 128-57.3 128-128S294.7 0 224 0 96 57.3 96 128s57.3 128 128 128zm89.6 32h-16.700c-22.200 10.200-46.900 16-72.900 16s-50.600-5.800-72.900-16h-16.700C60.200 288 0 348.200 0 422.400V464c0 26.500 21.500 48 48 48h352c26.500 0 48-21.500 48-48v-41.600c0-74.200-60.200-134.400-134.400-134.400z"></path></svg>
<span class="t" style="left: 1469.27px; top: 1266.49px; font-size: 26px; color: rgb(98, 101, 106); font-weight: 400; letter-spacing: 0.507px;">Core</span>
<span class="t" style="left: 1595.07px; top: 1266.49px; font-size: 26px; color: rgb(98, 101, 106); font-weight: 400; letter-spacing: -0.442px;">Sales</span>
<span class="t" style="left: 2438.57px; top: 1266.49px; font-size: 26px; color: rgb(98, 101, 106); font-weight: 400; letter-spacing: 0.964px;">3691186</span>
<div style="position:absolute;left:2833.00px;top:1260.30px;width:133.80px;height:45.20px;background:#dd5f6b;border-radius:7px"></div>
<svg style="position:absolute;left:2845.00px;top:1270.60px;width:21.44px;height:24.50px;" viewBox="0 0 448 512" preserveAspectRatio="none"><path fill="#fff" d="M268 416h24a12 12 0 0 0 12-12V188a12 12 0 0 0-12-12h-24a12 12 0 0 0-12 12v216a12 12 0 0 0 12 12zM432 80h-82.410l-34-56.700A48 48 0 0 0 274.410 0H173.590a48 48 0 0 0-41.160 23.300L98.410 80H16A16 16 0 0 0 0 96v16a16 16 0 0 0 16 16h16v336a48 48 0 0 0 48 48h288a48 48 0 0 0 48-48V128h16a16 16 0 0 0 16-16V96a16 16 0 0 0-16-16zM171.840 50.910A6 6 0 0 1 177 48h94a6 6 0 0 1 5.150 2.910L293.610 80H154.390zM368 464H80V128h288zm-212-48h24a12 12 0 0 0 12-12V188a12 12 0 0 0-12-12h-24a12 12 0 0 0-12 12v216a12 12 0 0 0 12 12z"></path></svg>
<span class="t" style="left: 2882.71px; top: 1270.86px; font-size: 24.5px; color: rgb(255, 255, 255); font-weight: 400; -webkit-text-stroke: 0.4px rgb(255, 255, 255); letter-spacing: 0.466px;">Delete</span>
<div style="position:absolute;left:2983.00px;top:1260.30px;width:111.00px;height:45.20px;background:#52ae94;border-radius:7px"></div>
<svg style="position:absolute;left:2994.90px;top:1270.60px;width:27.45px;height:24.40px;" viewBox="0 0 576 512" preserveAspectRatio="none"><path fill="#fff" d="M402.300 344.900l32-32c5-5 13.700-1.500 13.700 5.700V464c0 26.500-21.500 48-48 48H48c-26.500 0-48-21.500-48-48V112c0-26.500 21.500-48 48-48h273.500c7.100 0 10.700 8.600 5.700 13.700l-32 32c-1.500 1.500-3.500 2.300-5.700 2.300H48v352h352V350.500c0-2.100.8-4.100 2.300-5.600zm156.600-201.800L296.300 405.700l-90.400 10c-26.200 2.900-48.500-19.200-45.600-45.600l10-90.400L432.900 17.100c22.900-22.900 59.900-22.900 82.700 0l43.200 43.200c22.900 22.900 22.900 60 .1 82.800zM460.100 174L402 115.900 216.200 301.800l-7.300 65.300 65.300-7.300L460.100 174zm64.800-79.700l-43.200-43.200c-4.100-4.100-10.800-4.100-14.800 0L436 82l58.100 58.100 30.900-30.900c4-4.200 4-10.800-.1-14.900z"></path></svg>
<span class="t" style="left: 3039.71px; top: 1270.86px; font-size: 24.5px; color: rgb(255, 255, 255); font-weight: 400; -webkit-text-stroke: 0.4px rgb(255, 255, 255); letter-spacing: 0.447px;">Edit</span>
<div style="position:absolute;left:544.00px;top:1356.90px;width:2568.00px;height:114.10px;background:#f2f2f2"></div>
<div style="position:absolute;left:562.00px;top:1397.30px;width:25.60px;height:25.60px;box-sizing:border-box;border:2.4px solid #6b6b6b;border-radius:5.5px;background:#fff"></div>
<span class="t" style="left: 621.77px; top: 1380.09px; font-size: 26px; color: rgb(98, 101, 106); font-weight: 400; -webkit-text-stroke: 1px rgb(98, 101, 106); letter-spacing: 0.612px;">Abigail Glass</span>
<span class="t" style="left: 621.67px; top: 1422.69px; font-size: 26px; color: rgb(98, 101, 106); font-weight: 400; letter-spacing: -0.546px;">abigail.glass@megacorpdemoaccount.dk</span>
<svg style="position:absolute;left:1169.20px;top:1380.90px;width:16.00px;height:25.60px;" viewBox="0 0 320 512" preserveAspectRatio="none"><path fill="#62656a" d="M272 0H48C21.500 0 0 21.500 0 48v416c0 26.500 21.500 48 48 48h224c26.500 0 48-21.500 48-48V48c0-26.500-21.500-48-48-48zM160 480c-17.700 0-32-14.300-32-32s14.300-32 32-32 32 14.300 32 32-14.300 32-32 32zm112-108c0 6.600-5.400 12-12 12H60c-6.600 0-12-5.400-12-12V60c0-6.600 5.400-12 12-12h200c6.600 0 12 5.400 12 12v312z"></path></svg>
<span class="t" style="left: 1202.27px; top: 1379.99px; font-size: 26px; color: rgb(98, 101, 106); font-weight: 400; letter-spacing: 0.569px;">Using App</span>
<svg style="position:absolute;left:1431.00px;top:1380.40px;width:22.75px;height:26.00px;" viewBox="0 0 448 512" preserveAspectRatio="none"><path fill="#62656a" d="M224 256c70.7 0 128-57.3 128-128S294.7 0 224 0 96 57.3 96 128s57.3 128 128 128zm89.6 32h-16.700c-22.200 10.200-46.900 16-72.900 16s-50.600-5.800-72.900-16h-16.700C60.200 288 0 348.200 0 422.400V464c0 26.500 21.500 48 48 48h352c26.500 0 48-21.500 48-48v-41.600c0-74.200-60.200-134.400-134.400-134.400z"></path></svg>
<span class="t" style="left: 1469.27px; top: 1379.99px; font-size: 26px; color: rgb(98, 101, 106); font-weight: 400; letter-spacing: 0.507px;">Core</span>
<span class="t" style="left: 1595.07px; top: 1379.99px; font-size: 26px; color: rgb(98, 101, 106); font-weight: 400; letter-spacing: -0.442px;">Sales</span>
<span class="t" style="left: 2438.57px; top: 1379.99px; font-size: 26px; color: rgb(98, 101, 106); font-weight: 400; letter-spacing: 0.964px;">3691186</span>
<div style="position:absolute;left:2833.00px;top:1373.80px;width:133.80px;height:45.20px;background:#dd5f6b;border-radius:7px"></div>
<svg style="position:absolute;left:2845.00px;top:1384.10px;width:21.44px;height:24.50px;" viewBox="0 0 448 512" preserveAspectRatio="none"><path fill="#fff" d="M268 416h24a12 12 0 0 0 12-12V188a12 12 0 0 0-12-12h-24a12 12 0 0 0-12 12v216a12 12 0 0 0 12 12zM432 80h-82.410l-34-56.700A48 48 0 0 0 274.410 0H173.590a48 48 0 0 0-41.160 23.300L98.410 80H16A16 16 0 0 0 0 96v16a16 16 0 0 0 16 16h16v336a48 48 0 0 0 48 48h288a48 48 0 0 0 48-48V128h16a16 16 0 0 0 16-16V96a16 16 0 0 0-16-16zM171.840 50.910A6 6 0 0 1 177 48h94a6 6 0 0 1 5.150 2.910L293.610 80H154.390zM368 464H80V128h288zm-212-48h24a12 12 0 0 0 12-12V188a12 12 0 0 0-12-12h-24a12 12 0 0 0-12 12v216a12 12 0 0 0 12 12z"></path></svg>
<span class="t" style="left: 2882.71px; top: 1384.36px; font-size: 24.5px; color: rgb(255, 255, 255); font-weight: 400; -webkit-text-stroke: 0.4px rgb(255, 255, 255); letter-spacing: 0.466px;">Delete</span>
<div style="position:absolute;left:2983.00px;top:1373.80px;width:111.00px;height:45.20px;background:#52ae94;border-radius:7px"></div>
<svg style="position:absolute;left:2994.90px;top:1384.10px;width:27.45px;height:24.40px;" viewBox="0 0 576 512" preserveAspectRatio="none"><path fill="#fff" d="M402.300 344.900l32-32c5-5 13.700-1.500 13.700 5.700V464c0 26.500-21.500 48-48 48H48c-26.500 0-48-21.500-48-48V112c0-26.500 21.500-48 48-48h273.500c7.100 0 10.700 8.600 5.700 13.700l-32 32c-1.500 1.500-3.500 2.300-5.700 2.300H48v352h352V350.500c0-2.100.8-4.100 2.300-5.600zm156.600-201.800L296.300 405.700l-90.400 10c-26.200 2.900-48.500-19.200-45.600-45.600l10-90.400L432.900 17.100c22.900-22.900 59.900-22.900 82.700 0l43.200 43.200c22.900 22.900 22.900 60 .1 82.800zM460.100 174L402 115.900 216.200 301.800l-7.300 65.300 65.300-7.300L460.100 174zm64.800-79.700l-43.200-43.200c-4.100-4.100-10.800-4.100-14.800 0L436 82l58.100 58.100 30.900-30.900c4-4.200 4-10.800-.1-14.900z"></path></svg>
<span class="t" style="left: 3039.71px; top: 1384.36px; font-size: 24.5px; color: rgb(255, 255, 255); font-weight: 400; -webkit-text-stroke: 0.4px rgb(255, 255, 255); letter-spacing: 0.447px;">Edit</span>
<span class="t" style="left: 621.77px; top: 1494.19px; font-size: 26px; color: rgb(98, 101, 106); font-weight: 400; -webkit-text-stroke: 1px rgb(98, 101, 106); letter-spacing: 0.961px;">Abigail Larson</span>
<span class="t" style="left: 621.67px; top: 1536.79px; font-size: 26px; color: rgb(98, 101, 106); font-weight: 400; letter-spacing: -0.441px;">abigail.larson@megacorpdemoaccount.de</span>
<svg style="position:absolute;left:1168.80px;top:1493.50px;width:26.00px;height:26.00px;" viewBox="0 0 512 512" preserveAspectRatio="none"><path fill="#62656a" d="M256 8C119 8 8 119 8 256s111 248 248 248 248-111 248-248S393 8 256 8zm0 448c-110.500 0-200-89.500-200-200S145.500 56 256 56s200 89.500 200 200-89.500 200-200 200zm61.800-104.400l-84.900-61.700c-3.100-2.300-4.900-5.900-4.900-9.700V116c0-6.600 5.400-12 12-12h32c6.600 0 12 5.400 12 12v141.700l66.800 48.600c5.400 3.900 6.500 11.400 2.600 16.800L334.600 349c-3.900 5.300-11.400 6.500-16.800 2.600z"></path></svg>
<span class="t" style="left: 1211.27px; top: 1494.09px; font-size: 26px; color: rgb(98, 101, 106); font-weight: 400; letter-spacing: 1.531px;">Temporary</span>
<svg style="position:absolute;left:1168.97px;top:1530.30px;width:29.25px;height:26.00px;transform:rotate(-45deg);" viewBox="0 0 576 512" preserveAspectRatio="none"><path fill="#62656a" d="M128 160h320v192H128V160zm400 96c0 26.510 21.490 48 48 48v96c0 26.510-21.490 48-48 48H48c-26.510 0-48-21.490-48-48v-96c26.510 0 48-21.490 48-48s-21.490-48-48-48v-96c0-26.510 21.490-48 48-48h480c26.510 0 48 21.490 48 48v96c-26.510 0-48 21.490-48 48zm-48-104c0-13.255-10.745-24-24-24H120c-13.255 0-24 10.745-24 24v208c0 13.255 10.745 24 24 24h336c13.255 0 24-10.745 24-24V152z"></path></svg>
<span class="t" style="left: 1214.87px; top: 1530.84px; font-size: 26px; color: rgb(98, 101, 106); font-weight: 400; letter-spacing: 0.511px;">Active Trip</span>
<svg style="position:absolute;left:1168.97px;top:1567.10px;width:29.25px;height:26.00px;transform:rotate(-45deg);" viewBox="0 0 576 512" preserveAspectRatio="none"><path fill="#62656a" d="M128 160h320v192H128V160zm400 96c0 26.510 21.490 48 48 48v96c0 26.510-21.490 48-48 48H48c-26.510 0-48-21.490-48-48v-96c26.510 0 48-21.490 48-48s-21.490-48-48-48v-96c0-26.510 21.490-48 48-48h480c26.510 0 48 21.490 48 48v96c-26.510 0-48 21.490-48 48zm-48-104c0-13.255-10.745-24-24-24H120c-13.255 0-24 10.745-24 24v208c0 13.255 10.745 24 24 24h336c13.255 0 24-10.745 24-24V152z"></path></svg>
<span class="t" style="left: 1214.87px; top: 1567.59px; font-size: 26px; color: rgb(98, 101, 106); font-weight: 400; letter-spacing: 0.855px;">Upcoming Trip</span>
<svg style="position:absolute;left:1431.00px;top:1494.00px;width:29.25px;height:26.00px;" viewBox="0 0 576 512" preserveAspectRatio="none"><path fill="#62656a" d="M528 32H48C21.500 32 0 53.500 0 80v352c0 26.500 21.500 48 48 48h480c26.500 0 48-21.500 48-48V80c0-26.500-21.500-48-48-48zm0 400H48V80h480v352zM208 256c35.300 0 64-28.700 64-64s-28.700-64-64-64-64 28.700-64 64 28.700 64 64 64zm-89.600 128h179.200c12.400 0 22.400-8.600 22.400-19.200v-19.200c0-31.800-30.100-57.600-67.200-57.600-10.800 0-18.700 8-44.800 8-26.900 0-33.400-8-44.800-8-37.100 0-67.200 25.800-67.200 57.600v19.200c0 10.600 10 19.200 22.400 19.200zM360 320h112c4.400 0 8-3.600 8-8v-16c0-4.400-3.600-8-8-8H360c-4.400 0-8 3.600-8 8v16c0 4.400 3.600 8 8 8zm0-64h112c4.400 0 8-3.600 8-8v-16c0-4.400-3.600-8-8-8H360c-4.400 0-8 3.600-8 8v16c0 4.400 3.600 8 8 8zm0-64h112c4.400 0 8-3.600 8-8v-16c0-4.400-3.600-8-8-8H360c-4.400 0-8 3.600-8 8v16c0 4.400 3.600 8 8 8z"></path></svg>
<span class="t" style="left: 1476.27px; top: 1494.09px; font-size: 26px; color: rgb(98, 101, 106); font-weight: 400; letter-spacing: 0.025px;">Basic</span>
<div style="position:absolute;left:2983.00px;top:1487.90px;width:111.00px;height:45.20px;background:#52ae94;border-radius:7px"></div>
<svg style="position:absolute;left:2994.90px;top:1498.20px;width:27.45px;height:24.40px;" viewBox="0 0 576 512" preserveAspectRatio="none"><path fill="#fff" d="M402.300 344.900l32-32c5-5 13.700-1.500 13.700 5.700V464c0 26.500-21.500 48-48 48H48c-26.500 0-48-21.500-48-48V112c0-26.500 21.500-48 48-48h273.500c7.100 0 10.700 8.600 5.700 13.700l-32 32c-1.500 1.500-3.500 2.300-5.700 2.300H48v352h352V350.500c0-2.100.8-4.100 2.300-5.600zm156.600-201.800L296.300 405.700l-90.400 10c-26.200 2.900-48.500-19.200-45.600-45.600l10-90.400L432.900 17.100c22.900-22.900 59.900-22.900 82.700 0l43.200 43.200c22.900 22.900 22.900 60 .1 82.800zM460.100 174L402 115.900 216.200 301.800l-7.300 65.300 65.300-7.300L460.100 174zm64.800-79.700l-43.200-43.200c-4.100-4.100-10.800-4.100-14.800 0L436 82l58.100 58.100 30.900-30.900c4-4.200 4-10.800-.1-14.900z"></path></svg>
<span class="t" style="left: 3039.71px; top: 1498.46px; font-size: 24.5px; color: rgb(255, 255, 255); font-weight: 400; -webkit-text-stroke: 0.4px rgb(255, 255, 255); letter-spacing: 0.447px;">Edit</span>
<div style="position:absolute;left:544.00px;top:1615.90px;width:2568.00px;height:145.30px;background:#f2f2f2"></div>
<span class="t" style="left: 621.77px; top: 1639.09px; font-size: 26px; color: rgb(98, 101, 106); font-weight: 400; -webkit-text-stroke: 1px rgb(98, 101, 106); letter-spacing: 0.751px;">Abigail Robles</span>
<span class="t" style="left: 621.67px; top: 1681.69px; font-size: 26px; color: rgb(98, 101, 106); font-weight: 400; letter-spacing: -0.47px;">abigail.robles@megacorpdemoaccount.es</span>
<svg style="position:absolute;left:1168.80px;top:1638.40px;width:26.00px;height:26.00px;" viewBox="0 0 512 512" preserveAspectRatio="none"><path fill="#62656a" d="M256 8C119 8 8 119 8 256s111 248 248 248 248-111 248-248S393 8 256 8zm0 448c-110.500 0-200-89.500-200-200S145.500 56 256 56s200 89.500 200 200-89.500 200-200 200zm61.800-104.400l-84.900-61.700c-3.100-2.300-4.900-5.900-4.900-9.700V116c0-6.600 5.400-12 12-12h32c6.600 0 12 5.400 12 12v141.700l66.800 48.600c5.400 3.900 6.500 11.400 2.600 16.800L334.600 349c-3.900 5.300-11.400 6.500-16.800 2.600z"></path></svg>
<span class="t" style="left: 1211.27px; top: 1638.99px; font-size: 26px; color: rgb(98, 101, 106); font-weight: 400; letter-spacing: 1.531px;">Temporary</span>
<svg style="position:absolute;left:1168.97px;top:1675.20px;width:29.25px;height:26.00px;transform:rotate(-45deg);" viewBox="0 0 576 512" preserveAspectRatio="none"><path fill="#62656a" d="M128 160h320v192H128V160zm400 96c0 26.510 21.490 48 48 48v96c0 26.510-21.490 48-48 48H48c-26.510 0-48-21.490-48-48v-96c26.510 0 48-21.490 48-48s-21.490-48-48-48v-96c0-26.510 21.490-48 48-48h480c26.510 0 48 21.490 48 48v96c-26.510 0-48 21.490-48 48zm-48-104c0-13.255-10.745-24-24-24H120c-13.255 0-24 10.745-24 24v208c0 13.255 10.745 24 24 24h336c13.255 0 24-10.745 24-24V152z"></path></svg>
<span class="t" style="left: 1214.87px; top: 1675.74px; font-size: 26px; color: rgb(98, 101, 106); font-weight: 400; letter-spacing: 0.511px;">Active Trip</span>
<svg style="position:absolute;left:1168.97px;top:1712.00px;width:29.25px;height:26.00px;transform:rotate(-45deg);" viewBox="0 0 576 512" preserveAspectRatio="none"><path fill="#62656a" d="M128 160h320v192H128V160zm400 96c0 26.510 21.490 48 48 48v96c0 26.510-21.490 48-48 48H48c-26.510 0-48-21.490-48-48v-96c26.510 0 48-21.490 48-48s-21.490-48-48-48v-96c0-26.510 21.490-48 48-48h480c26.510 0 48 21.490 48 48v96c-26.510 0-48 21.490-48 48zm-48-104c0-13.255-10.745-24-24-24H120c-13.255 0-24 10.745-24 24v208c0 13.255 10.745 24 24 24h336c13.255 0 24-10.745 24-24V152z"></path></svg>
<span class="t" style="left: 1214.87px; top: 1712.49px; font-size: 26px; color: rgb(98, 101, 106); font-weight: 400; letter-spacing: 0.855px;">Upcoming Trip</span>
<svg style="position:absolute;left:1431.00px;top:1638.90px;width:29.25px;height:26.00px;" viewBox="0 0 576 512" preserveAspectRatio="none"><path fill="#62656a" d="M528 32H48C21.500 32 0 53.500 0 80v352c0 26.500 21.500 48 48 48h480c26.500 0 48-21.500 48-48V80c0-26.500-21.500-48-48-48zm0 400H48V80h480v352zM208 256c35.300 0 64-28.700 64-64s-28.700-64-64-64-64 28.700-64 64 28.700 64 64 64zm-89.600 128h179.200c12.400 0 22.400-8.600 22.400-19.200v-19.200c0-31.800-30.100-57.600-67.200-57.600-10.800 0-18.700 8-44.800 8-26.900 0-33.400-8-44.800-8-37.100 0-67.200 25.800-67.200 57.600v19.200c0 10.600 10 19.200 22.400 19.200zM360 320h112c4.400 0 8-3.600 8-8v-16c0-4.400-3.600-8-8-8H360c-4.400 0-8 3.600-8 8v16c0 4.400 3.600 8 8 8zm0-64h112c4.400 0 8-3.600 8-8v-16c0-4.400-3.600-8-8-8H360c-4.400 0-8 3.600-8 8v16c0 4.400 3.600 8 8 8zm0-64h112c4.400 0 8-3.600 8-8v-16c0-4.400-3.600-8-8-8H360c-4.400 0-8 3.600-8 8v16c0 4.400 3.600 8 8 8z"></path></svg>
<span class="t" style="left: 1476.27px; top: 1638.99px; font-size: 26px; color: rgb(98, 101, 106); font-weight: 400; letter-spacing: 0.025px;">Basic</span>
<span class="t" style="left: 1595.07px; top: 1638.99px; font-size: 26px; color: rgb(98, 101, 106); font-weight: 400; letter-spacing: -0.442px;">Sales</span>
<div style="position:absolute;left:2983.00px;top:1632.80px;width:111.00px;height:45.20px;background:#52ae94;border-radius:7px"></div>
<svg style="position:absolute;left:2994.90px;top:1643.10px;width:27.45px;height:24.40px;" viewBox="0 0 576 512" preserveAspectRatio="none"><path fill="#fff" d="M402.300 344.900l32-32c5-5 13.700-1.500 13.700 5.700V464c0 26.500-21.500 48-48 48H48c-26.500 0-48-21.500-48-48V112c0-26.500 21.500-48 48-48h273.500c7.100 0 10.700 8.600 5.700 13.700l-32 32c-1.500 1.500-3.500 2.300-5.700 2.300H48v352h352V350.500c0-2.100.8-4.100 2.300-5.600zm156.600-201.800L296.300 405.700l-90.400 10c-26.200 2.900-48.500-19.200-45.600-45.600l10-90.400L432.900 17.100c22.900-22.900 59.900-22.900 82.700 0l43.200 43.200c22.900 22.900 22.900 60 .1 82.800zM460.100 174L402 115.900 216.200 301.800l-7.300 65.300 65.300-7.300L460.100 174zm64.800-79.700l-43.200-43.200c-4.100-4.100-10.800-4.100-14.800 0L436 82l58.100 58.100 30.900-30.900c4-4.200 4-10.800-.1-14.900z"></path></svg>
<span class="t" style="left: 3039.71px; top: 1643.36px; font-size: 24.5px; color: rgb(255, 255, 255); font-weight: 400; -webkit-text-stroke: 0.4px rgb(255, 255, 255); letter-spacing: 0.447px;">Edit</span>
<div style="position:absolute;left:544.00px;top:675.90px;width:2568.00px;height:2.00px;background:#d3d9de"></div>
<div style="position:absolute;left:544.00px;top:789.20px;width:2568.00px;height:2.00px;background:#d3d9de"></div>
<div style="position:absolute;left:544.00px;top:902.50px;width:2568.00px;height:2.00px;background:#d3d9de"></div>
<div style="position:absolute;left:544.00px;top:1015.90px;width:2568.00px;height:2.00px;background:#d3d9de"></div>
<div style="position:absolute;left:544.00px;top:1129.00px;width:2568.00px;height:2.00px;background:#d3d9de"></div>
<div style="position:absolute;left:544.00px;top:1242.40px;width:2568.00px;height:2.00px;background:#d3d9de"></div>
<div style="position:absolute;left:544.00px;top:1355.90px;width:2568.00px;height:2.00px;background:#d3d9de"></div>
<div style="position:absolute;left:544.00px;top:1470.00px;width:2568.00px;height:2.00px;background:#d3d9de"></div>
<div style="position:absolute;left:544.00px;top:1614.90px;width:2568.00px;height:2.00px;background:#d3d9de"></div>
<div style="position:absolute;left:544.00px;top:1760.20px;width:2568.00px;height:2.00px;background:#d3d9de"></div>
<div style="position:absolute;left:544.20px;top:563.80px;width:2.00px;height:1170.20px;background:#d3d9de"></div>
<div style="position:absolute;left:603.70px;top:563.80px;width:2.00px;height:1170.20px;background:#d3d9de"></div>
<div style="position:absolute;left:1150.60px;top:563.80px;width:2.00px;height:1170.20px;background:#d3d9de"></div>
<div style="position:absolute;left:1413.00px;top:563.80px;width:2.00px;height:1170.20px;background:#d3d9de"></div>
<div style="position:absolute;left:1577.00px;top:563.80px;width:2.00px;height:1170.20px;background:#d3d9de"></div>
<div style="position:absolute;left:1711.00px;top:563.80px;width:2.00px;height:1170.20px;background:#d3d9de"></div>
<div style="position:absolute;left:2326.80px;top:563.80px;width:2.00px;height:1170.20px;background:#d3d9de"></div>
<div style="position:absolute;left:2420.70px;top:563.80px;width:2.00px;height:1170.20px;background:#d3d9de"></div>
<div style="position:absolute;left:2656.00px;top:563.80px;width:2.00px;height:1170.20px;background:#d3d9de"></div>
<div style="position:absolute;left:2815.20px;top:563.80px;width:2.00px;height:1170.20px;background:#d3d9de"></div>
<div style="position:absolute;left:3110.00px;top:563.80px;width:2.00px;height:1170.20px;background:#d3d9de"></div>
<div id="sidebar"></div>
<div id="logobar"></div>
<svg style="position:absolute;left:0;top:0;width:464px;height:116px" viewBox="0 0 464 116">
<circle cx="67.4" cy="55.5" r="30.6" fill="none" stroke="#8fc153" stroke-width="6.5"></circle>
<polygon points="49,71.3 51.8,62.1 60.8,62.1 58.4,71.3" fill="#8fc153"></polygon>
<polygon points="60,71.3 64.4,52.7 73.1,52.7 70.4,71.3" fill="#f1c442"></polygon>
<polygon points="71.9,71.3 78.9,44.2 87.9,44.2 80.8,71.3" fill="#c8332f"></polygon>
<text x="111.6" y="76.7" font-family="Liberation Sans, sans-serif" font-weight="700" font-size="59.8" fill="#8fc153" textLength="302.4" lengthAdjust="spacingAndGlyphs">SAFETURE</text>
<circle cx="420" cy="28.4" r="5.5" fill="none" stroke="#8fc153" stroke-width="1.8"></circle>
<text x="417.2" y="31.5" font-family="Liberation Sans, sans-serif" font-weight="700" font-size="8.4" fill="#8fc153">R</text>
</svg>
<svg style="position:absolute;left:43.50px;top:153.70px;width:32.50px;height:26.00px;" viewBox="0 0 640 512" preserveAspectRatio="none"><path fill="#a9b0c4" d="M519.2 127.9l-47.6-47.6A56.252 56.252 0 0 0 432 64H205.2c-14.800 0-29.100 5.900-39.600 16.300L118 127.900H0v255.700h64c17.600 0 31.800-14.200 31.900-31.700h9.100l84.600 76.400c30.900 25.100 73.800 25.700 105.600 3.800 12.500 10.800 26 15.900 41.100 15.900 18.200 0 35.300-7.400 48.800-24 22.100 8.700 48.200 2.600 64-16.800l26.200-32.300c5.600-6.900 9.100-14.800 10.900-23h57.900c.1 17.500 14.400 31.700 31.900 31.700h64V127.900H519.200zM48 351.600c-8.800 0-16-7.200-16-16s7.200-16 16-16 16 7.200 16 16c0 8.900-7.200 16-16 16zm390-6.900l-26.100 32.200c-2.800 3.400-7.800 4-11.300 1.200l-23.900-19.400-30 36.500c-6 7.300-15 4.800-18 2.400l-36.800-31.500-15.600 19.200c-13.900 17.100-39.200 19.700-55.300 6.600l-97.300-88H96V175.800h41.900l61.700-61.600c2-.8 3.700-1.500 5.700-2.300H262l-38.700 35.500c-29.400 26.900-31.100 72.300-4.400 101.300 14.800 16.200 61.200 41.200 101.500 4.400l8.200-7.500 108.200 87.800c3.400 2.800 3.900 7.900 1.200 11.300zm106-40.800h-69.200c-2.300-2.800-4.900-5.400-7.700-7.700l-102.700-83.400 12.500-11.400c6.500-6 7-16.100 1-22.600L367 167.100c-6-6.500-16.100-6.900-22.600-1l-55.200 50.600c-9.500 8.700-25.700 9.400-34.600 0-9.300-9.900-8.500-25.100 1.200-33.900l65.600-60.100c7.400-6.800 17-10.500 27-10.500l83.700-.2c2.100 0 4.100.8 5.500 2.300l61.700 61.600H544v128zm48 47.700c-8.800 0-16-7.200-16-16s7.200-16 16-16 16 7.200 16 16c0 8.900-7.200 16-16 16z"></path></svg>
<span class="t" style="left: 105.26px; top: 153.85px; font-size: 26.4px; color: rgb(169, 176, 196); font-weight: 400; -webkit-text-stroke: 0.3px rgb(169, 176, 196); letter-spacing: 0.383px;">Partner Dashboard</span>
<svg style="position:absolute;left:43.50px;top:256.10px;width:29.25px;height:26.00px;" viewBox="0 0 576 512" preserveAspectRatio="none"><path fill="#a9b0c4" d="M288 32C128.940 32 0 160.940 0 320c0 52.800 14.250 102.260 39.060 144.800 5.610 9.620 16.300 15.200 27.440 15.200h443c11.140 0 21.830-5.580 27.440-15.200C561.750 422.260 576 372.800 576 320c0-159.060-128.940-288-288-288zm0 64c14.710 0 26.580 10.130 30.320 23.650-1.110 2.260-2.640 4.230-3.450 6.670l-9.220 27.670c-5.130 3.490-10.970 6.010-17.640 6.010-17.670 0-32-14.330-32-32S270.330 96 288 96zM96 384c-17.670 0-32-14.330-32-32s14.330-32 32-32 32 14.330 32 32-14.330 32-32 32zm48-160c-17.670 0-32-14.330-32-32s14.330-32 32-32 32 14.330 32 32-14.330 32-32 32zm246.770-72.410l-61.330 184C343.130 347.330 352 364.540 352 384c0 11.720-3.380 22.550-8.880 32H232.880c-5.500-9.450-8.880-20.280-8.880-32 0-33.940 26.500-61.430 59.900-63.590l61.340-184.010c4.170-12.560 17.730-19.450 30.360-15.170 12.570 4.190 19.350 17.790 15.170 30.360zm14.660 57.200l15.520-46.550c3.470-1.290 7.130-2.230 11.050-2.230 17.670 0 32 14.330 32 32s-14.330 32-32 32c-11.380-.010-20.890-6.280-26.570-15.220zM480 384c-17.670 0-32-14.330-32-32s14.330-32 32-32 32 14.330 32 32-14.330 32-32 32z"></path></svg>
<span class="t" style="left: 105.26px; top: 256.25px; font-size: 26.4px; color: rgb(169, 176, 196); font-weight: 400; -webkit-text-stroke: 0.3px rgb(169, 176, 196); letter-spacing: 0.538px;">Dashboard</span>
<svg style="position:absolute;left:43.50px;top:358.50px;width:25.19px;height:26.00px;" viewBox="0 0 496 512" preserveAspectRatio="none"><path fill="#a9b0c4" d="M336.500 160C322 70.700 287.800 8 248 8s-74 62.700-88.500 152h177zM152 256c0 22.200 1.200 43.500 3.300 64h185.300c2.100-20.500 3.300-41.800 3.300-64s-1.200-43.500-3.300-64H155.300c-2.100 20.500-3.300 41.800-3.300 64zm324.700-96c-28.600-67.900-86.500-120.400-158-141.600 24.400 33.800 41.200 84.700 50 141.600h108zM177.200 18.400C105.800 39.600 47.800 92.100 19.300 160h108c8.700-56.900 25.500-107.800 49.900-141.600zM487.400 192H372.700c2.100 21 3.300 42.500 3.300 64s-1.200 43-3.300 64h114.600c5.500-20.500 8.600-41.800 8.600-64s-3.100-43.500-8.500-64zM120 256c0-21.500 1.200-43 3.300-64H8.600C3.200 212.500 0 233.800 0 256s3.200 43.500 8.600 64h114.600c-2-21-3.200-42.500-3.200-64zm39.500 96c14.500 89.300 48.700 152 88.500 152s74-62.700 88.500-152h-177zm159.300 141.600c71.400-21.200 129.400-73.700 158-141.600h-108c-8.800 56.900-25.600 107.800-50 141.600zM19.300 352c28.600 67.900 86.500 120.400 158 141.600-24.400-33.800-41.200-84.700-50-141.600h-108z"></path></svg>
<span class="t" style="left: 105.26px; top: 358.65px; font-size: 26.4px; color: rgb(169, 176, 196); font-weight: 400; -webkit-text-stroke: 0.3px rgb(169, 176, 196); letter-spacing: 0.11px;">Security Overview</span>
<svg style="position:absolute;left:43.50px;top:460.90px;width:26.00px;height:26.00px;" viewBox="0 0 512 512" preserveAspectRatio="none"><path fill="#a9b0c4" d="M475.115 163.781L336 252.309v-68.280c0-18.916-20.931-30.399-36.885-20.248L160 252.309V56c0-13.255-10.745-24-24-24H24C10.745 32 0 42.745 0 56v400c0 13.255 10.745 24 24 24h464c13.255 0 24-10.745 24-24V184.029c0-18.917-20.931-30.399-36.885-20.248z"></path></svg>
<span class="t" style="left: 105.26px; top: 461.05px; font-size: 26.4px; color: rgb(169, 176, 196); font-weight: 400; -webkit-text-stroke: 0.3px rgb(169, 176, 196); letter-spacing: -0.005px;">Facilities</span>
<svg style="position:absolute;left:43.50px;top:563.30px;width:29.25px;height:26.00px;transform:rotate(-45deg);" viewBox="0 0 576 512" preserveAspectRatio="none"><path fill="#a9b0c4" d="M480 192H365.710L260.610 8.060A16.014 16.014 0 0 0 246.710 0h-65.500c-10.630 0-18.300 10.170-15.380 20.390L214.860 192H112l-43.200-57.600c-3.020-4.030-7.770-6.400-12.800-6.400H16.010C5.600 128-2.040 137.780.490 147.880L32 256 .490 364.120C-2.040 374.220 5.600 384 16.010 384H56c5.040 0 9.780-2.370 12.800-6.400L112 320h102.860l-49.030 171.600c-2.920 10.220 4.750 20.400 15.380 20.400h65.500c5.740 0 11.040-3.080 13.890-8.060L365.710 320H480c35.350 0 96-28.650 96-64s-60.650-64-96-64z"></path></svg>
<span class="t" style="left: 105.26px; top: 563.45px; font-size: 26.4px; color: rgb(169, 176, 196); font-weight: 400; -webkit-text-stroke: 0.3px rgb(169, 176, 196); letter-spacing: 0.049px;">Travel Data</span>
<svg style="position:absolute;left:43.50px;top:665.70px;width:29.25px;height:26.00px;" viewBox="0 0 576 512" preserveAspectRatio="none"><path fill="#a9b0c4" d="M416 192c0-88.400-93.100-160-208-160S0 103.600 0 192c0 34.300 14.100 65.900 38 92-13.400 30.200-35.500 54.200-35.800 54.500-2.200 2.300-2.800 5.700-1.500 8.700S4.800 352 8 352c36.600 0 66.900-12.300 88.700-25 32.200 15.700 70.300 25 111.300 25 114.900 0 208-71.600 208-160zm122 220c23.900-26 38-57.700 38-92 0-66.900-53.500-124.200-129.300-148.100.9 6.600 1.300 13.300 1.300 20.100 0 105.900-107.700 192-240 192-10.800 0-21.300-.8-31.700-1.900C207.800 439.600 281.800 480 368 480c41 0 79.100-9.200 111.300-25 21.800 12.700 52.100 25 88.700 25 3.200 0 6.100-1.900 7.300-4.800 1.300-2.900.7-6.300-1.500-8.700-.3-.3-22.400-24.200-35.800-54.500z"></path></svg>
<span class="t" style="left: 105.26px; top: 665.85px; font-size: 26.4px; color: rgb(169, 176, 196); font-weight: 400; -webkit-text-stroke: 0.3px rgb(169, 176, 196); letter-spacing: 0.631px;">Communication</span>
<svg style="position:absolute;left:426.50px;top:667.00px;width:21.00px;height:24.00px;" viewBox="0 0 448 512" preserveAspectRatio="none"><path fill="#a9b0c4" d="M207.029 381.476L12.686 187.132c-9.373-9.373-9.373-24.569 0-33.941l22.667-22.667c9.357-9.357 24.522-9.375 33.901-.04L224 284.505l154.745-154.021c9.379-9.335 24.544-9.317 33.901.04l22.667 22.667c9.373 9.373 9.373 24.569 0 33.941L240.971 381.476c-9.373 9.372-24.569 9.372-33.942 0z"></path></svg>
<svg style="position:absolute;left:43.50px;top:768.10px;width:26.00px;height:26.00px;" viewBox="0 0 512 512" preserveAspectRatio="none"><path fill="#a9b0c4" d="M497.900 142.100l-46.100 46.100c-4.700 4.700-12.300 4.700-17 0l-111-111c-4.700-4.700-4.700-12.300 0-17l46.100-46.100c18.700-18.700 49.100-18.700 67.900 0l60.100 60.100c18.800 18.700 18.800 49.100 0 67.900zM284.200 99.800L21.600 362.400.4 483.900c-2.900 16.400 11.400 30.600 27.800 27.800l121.500-21.300 262.600-262.600c4.700-4.700 4.700-12.300 0-17l-111-111c-4.800-4.700-12.400-4.700-17.100 0zM124.100 339.900c-5.500-5.500-5.500-14.300 0-19.800l154-154c5.500-5.500 14.300-5.500 19.800 0s5.500 14.300 0 19.800l-154 154c-5.500 5.500-14.300 5.500-19.800 0zM88 424h48v36.300l-64.500 11.300-31.100-31.100L51.700 376H88v48z"></path></svg>
<span class="t" style="left: 105.26px; top: 768.25px; font-size: 26.4px; color: rgb(169, 176, 196); font-weight: 400; -webkit-text-stroke: 0.3px rgb(169, 176, 196); letter-spacing: 0.812px;">Content</span>
<svg style="position:absolute;left:426.50px;top:769.40px;width:21.00px;height:24.00px;" viewBox="0 0 448 512" preserveAspectRatio="none"><path fill="#a9b0c4" d="M207.029 381.476L12.686 187.132c-9.373-9.373-9.373-24.569 0-33.941l22.667-22.667c9.357-9.357 24.522-9.375 33.901-.04L224 284.505l154.745-154.021c9.379-9.335 24.544-9.317 33.901.04l22.667 22.667c9.373 9.373 9.373 24.569 0 33.941L240.971 381.476c-9.373 9.372-24.569 9.372-33.942 0z"></path></svg>
<svg style="position:absolute;left:43.50px;top:870.50px;width:26.00px;height:26.00px;" viewBox="0 0 512 512" preserveAspectRatio="none"><path fill="#a9b0c4" d="M396.800 352h22.400c6.400 0 12.800-6.400 12.800-12.800V108.800c0-6.400-6.400-12.800-12.800-12.800h-22.400c-6.400 0-12.800 6.400-12.800 12.800v230.400c0 6.400 6.400 12.800 12.800 12.800zm-192 0h22.400c6.400 0 12.800-6.400 12.800-12.800V140.800c0-6.400-6.400-12.800-12.800-12.800h-22.400c-6.400 0-12.800 6.400-12.800 12.800v198.400c0 6.400 6.400 12.800 12.800 12.800zm96 0h22.400c6.400 0 12.800-6.400 12.800-12.800V204.800c0-6.400-6.400-12.800-12.800-12.800h-22.400c-6.400 0-12.800 6.400-12.800 12.800v134.400c0 6.400 6.400 12.800 12.800 12.800zM496 400H48V80c0-8.840-7.160-16-16-16H16C7.160 64 0 71.160 0 80v336c0 17.670 14.330 32 32 32h464c8.840 0 16-7.160 16-16v-16c0-8.840-7.160-16-16-16zm-387.200-48h22.400c6.400 0 12.800-6.400 12.800-12.800v-70.400c0-6.400-6.400-12.800-12.800-12.800h-22.400c-6.400 0-12.800 6.400-12.800 12.800v70.400c0 6.400 6.400 12.800 12.800 12.800z"></path></svg>
<span class="t" style="left: 105.26px; top: 870.65px; font-size: 26.4px; color: rgb(169, 176, 196); font-weight: 400; -webkit-text-stroke: 0.3px rgb(169, 176, 196); letter-spacing: 0.1px;">Analytics</span>
<div style="position:absolute;left:0.00px;top:934.70px;width:464.00px;height:103.40px;background:#262626"></div>
<div style="position:absolute;left:0.00px;top:934.70px;width:2.60px;height:103.40px;background:#8fc153"></div>
<svg style="position:absolute;left:51.80px;top:972.90px;width:22.75px;height:26.00px;" viewBox="0 0 448 512" preserveAspectRatio="none"><path fill="#fff" d="M224 256c70.7 0 128-57.3 128-128S294.7 0 224 0 96 57.3 96 128s57.3 128 128 128zm89.6 32h-16.700c-22.200 10.200-46.900 16-72.900 16s-50.600-5.800-72.900-16h-16.700C60.200 288 0 348.200 0 422.400V464c0 26.500 21.500 48 48 48h352c26.500 0 48-21.500 48-48v-41.600c0-74.200-60.200-134.400-134.400-134.400z"></path></svg>
<span class="t" style="left: 113.56px; top: 973.05px; font-size: 26.4px; color: rgb(255, 255, 255); font-weight: 400; -webkit-text-stroke: 0.3px rgb(255, 255, 255); letter-spacing: 0.098px;">Users</span>
<svg style="position:absolute;left:43.50px;top:1075.30px;width:26.00px;height:26.00px;" viewBox="0 0 512 512" preserveAspectRatio="none"><path fill="#a9b0c4" d="M464 480H48c-26.510 0-48-21.490-48-48V80c0-26.510 21.490-48 48-48h416c26.510 0 48 21.490 48 48v352c0 26.510-21.490 48-48 48zM128 120c-22.091 0-40 17.909-40 40s17.909 40 40 40 40-17.909 40-40-17.909-40-40-40zm0 96c-22.091 0-40 17.909-40 40s17.909 40 40 40 40-17.909 40-40-17.909-40-40-40zm0 96c-22.091 0-40 17.909-40 40s17.909 40 40 40 40-17.909 40-40-17.909-40-40-40zm288-136v-32c0-6.627-5.373-12-12-12H204c-6.627 0-12 5.373-12 12v32c0 6.627 5.373 12 12 12h200c6.627 0 12-5.373 12-12zm0 96v-32c0-6.627-5.373-12-12-12H204c-6.627 0-12 5.373-12 12v32c0 6.627 5.373 12 12 12h200c6.627 0 12-5.373 12-12zm0 96v-32c0-6.627-5.373-12-12-12H204c-6.627 0-12 5.373-12 12v32c0 6.627 5.373 12 12 12h200c6.627 0 12-5.373 12-12z"></path></svg>
<span class="t" style="left: 105.26px; top: 1075.45px; font-size: 26.4px; color: rgb(169, 176, 196); font-weight: 400; -webkit-text-stroke: 0.3px rgb(169, 176, 196); letter-spacing: -0.075px;">Policies</span>
<svg style="position:absolute;left:43.50px;top:1177.70px;width:26.00px;height:26.00px;" viewBox="0 0 512 512" preserveAspectRatio="none"><path fill="#a9b0c4" d="M349.565 98.783C295.978 98.783 251.721 64 184.348 64c-24.955 0-47.309 4.384-68.045 12.013a55.947 55.947 0 0 0 3.586-23.562C118.117 24.015 94.806 1.206 66.338.048 34.345-1.254 8 24.296 8 56c0 19.026 9.497 35.825 24 45.945V488c0 13.255 10.745 24 24 24h16c13.255 0 24-10.745 24-24v-94.400c28.311-12.064 63.582-22.122 114.435-22.122 53.588 0 97.844 34.783 165.217 34.783 48.169 0 86.667-16.294 122.505-40.858C506.840 359.452 512 349.571 512 339.045v-243.100c0-23.393-24.269-38.870-45.485-29.016-34.338 15.948-76.454 31.854-116.950 31.854z"></path></svg>
<span class="t" style="left: 105.26px; top: 1177.85px; font-size: 26.4px; color: rgb(169, 176, 196); font-weight: 400; -webkit-text-stroke: 0.3px rgb(169, 176, 196); letter-spacing: 0.73px;">Country Information</span>
<svg style="position:absolute;left:43.50px;top:1280.10px;width:26.00px;height:26.00px;" viewBox="0 0 512 512" preserveAspectRatio="none"><path fill="#a9b0c4" d="M96 480h320V128h-32V80c0-26.510-21.490-48-48-48H176c-26.510 0-48 21.490-48 48v48H96v352zm96-384h128v32H192V96zm320 80v256c0 26.510-21.490 48-48 48h-16V128h16c26.510 0 48 21.490 48 48zM64 480H48c-26.510 0-48-21.490-48-48V176c0-26.510 21.490-48 48-48h16v352zm288-208v32c0 8.837-7.163 16-16 16h-48v48c0 8.837-7.163 16-16 16h-32c-8.837 0-16-7.163-16-16v-48h-48c-8.837 0-16-7.163-16-16v-32c0-8.837 7.163-16 16-16h48v-48c0-8.837 7.163-16 16-16h32c8.837 0 16 7.163 16 16v48h48c8.837 0 16 7.163 16 16z"></path></svg>
<span class="t" style="left: 105.26px; top: 1280.25px; font-size: 26.4px; color: rgb(169, 176, 196); font-weight: 400; -webkit-text-stroke: 0.3px rgb(169, 176, 196); letter-spacing: 0.196px;">Medical</span>
<svg style="position:absolute;left:43.50px;top:1382.50px;width:32.50px;height:26.00px;" viewBox="0 0 640 512" preserveAspectRatio="none"><path fill="#a9b0c4" d="M622.340 153.200L343.400 67.500c-15.200-4.670-31.600-4.670-46.790 0L17.660 153.200c-23.540 7.230-23.540 38.360 0 45.590l48.630 14.940c-10.670 13.190-17.230 29.280-17.880 46.900C38.780 266.150 32 276.110 32 288c0 10.780 5.680 19.850 13.860 25.650L20.330 428.530C18.110 438.520 25.710 448 35.940 448h56.110c10.240 0 17.840-9.480 15.620-19.470L82.140 313.650C90.320 307.850 96 298.780 96 288c0-11.570-6.470-21.250-15.660-26.870.760-15.020 8.440-28.300 20.690-36.720L296.600 284.500c9.060 2.780 26.440 6.250 46.790 0l278.950-85.700c23.550-7.240 23.550-38.360 0-45.600zM352.790 315.090c-28.530 8.760-52.840 3.920-65.590 0l-145.020-44.550L128 384c0 35.350 85.960 64 192 64s192-28.650 192-64l-14.180-113.470-145.030 44.560z"></path></svg>
<span class="t" style="left: 105.26px; top: 1382.65px; font-size: 26.4px; color: rgb(169, 176, 196); font-weight: 400; -webkit-text-stroke: 0.3px rgb(169, 176, 196); letter-spacing: 0.013px;">E-learning</span>
<svg style="position:absolute;left:43.50px;top:1484.90px;width:29.25px;height:26.00px;" viewBox="0 0 576 512" preserveAspectRatio="none"><path fill="#a9b0c4" d="M519.442 288.651c-41.519 0-59.500 31.593-82.058 31.593C377.409 320.244 432 144 432 144s-196.288 80-196.288-3.297c0-35.827 36.288-46.250 36.288-85.985C272 19.216 243.885 0 210.539 0c-34.654 0-66.366 18.891-66.366 56.346 0 41.364 31.711 59.277 31.711 81.750C175.885 207.719 0 166.758 0 166.758v333.237s178.635 41.047 178.635-28.662c0-22.473-40-40.107-40-81.471 0-37.456 29.250-56.346 63.577-56.346 33.673 0 61.788 19.216 61.788 54.717 0 39.735-36.288 50.158-36.288 85.985 0 60.803 129.675 25.730 181.230 25.730 0 0-34.725-120.101 25.827-120.101 35.962 0 46.423 36.152 86.308 36.152C556.712 416 576 387.990 576 354.443c0-34.199-18.962-65.792-56.558-65.792z"></path></svg>
<span class="t" style="left: 105.26px; top: 1485.05px; font-size: 26.4px; color: rgb(169, 176, 196); font-weight: 400; -webkit-text-stroke: 0.3px rgb(169, 176, 196); letter-spacing: 0.476px;">Marketplace</span>
<div style="position:absolute;left:464.00px;top:1540.50px;width:17.50px;height:63.00px;background:#000;border-radius:0 17px 17px 0;box-shadow:2px 2px 6px rgba(0,0,0,.35)"></div>
<svg style="position:absolute;left:434.30px;top:1553.60px;width:31.76px;height:36.30px;" viewBox="0 0 448 512" preserveAspectRatio="none"><path fill="#6d6f72" d="M272 157.100v197.800c0 10.700-13 16.100-20.500 8.500l-98.300-98.900c-4.700-4.700-4.700-12.200 0-16.900l98.300-98.900c7.500-7.700 20.500-2.300 20.500 8.400zM448 80v352c0 26.500-21.500 48-48 48H48c-26.500 0-48-21.500-48-48V80c0-26.500 21.500-48 48-48h352c26.500 0 48 21.500 48 48zm-48 346V86c0-3.300-2.700-6-6-6H54c-3.300 0-6 2.700-6 6v340c0 3.300 2.700 6 6 6h340c3.300 0 6-2.700 6-6z"></path></svg>
<div style="position:absolute;left:14.00px;top:1623.80px;width:100.20px;height:100.20px;background:#53ae94;border-radius:50%"></div>
<svg style="position:absolute;left:0;top:1610px;width:160px;height:124px" viewBox="0 0 160 124"><path d="M50.9 53.6 C51.3 46.5 57 43.1 63.9 43.1 C71.6 43.1 77.4 47.3 77.4 54 C77.4 63.5 63.6 64.5 63.6 74.6" fill="none" stroke="#fff" stroke-width="8.8" stroke-linecap="round"></path><circle cx="63.6" cy="86.5" r="5.6" fill="#fff"></circle></svg>
<div id="botshadow"></div>
</body></html>
